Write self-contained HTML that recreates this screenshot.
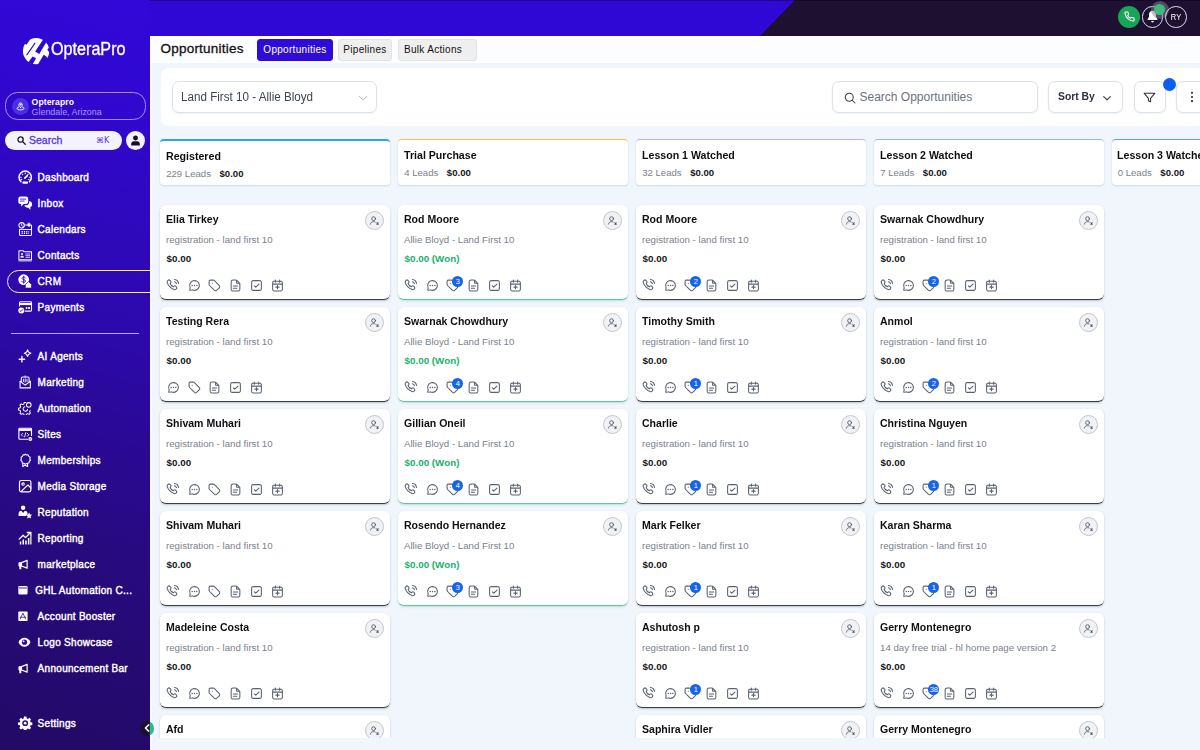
<!DOCTYPE html>
<html lang="en"><head><meta charset="utf-8"><title>Opportunities</title>
<style>
*{box-sizing:border-box;margin:0;padding:0}
html,body{width:1200px;height:750px;overflow:hidden;background:#f1f5fc;font-family:"Liberation Sans",sans-serif;color:#0f1115}
#top{position:absolute;z-index:2;left:0;top:0;width:1200px;height:35.500px;background:#3008d6;overflow:hidden}
#side{position:absolute;z-index:3;left:0;top:0;width:150px;height:750px;overflow:hidden;background:linear-gradient(195deg,#3108d8 0%,#3008d2 12%,#2c09a8 45%,#270a80 70%,#240a6c 92%,#230a66 100%)}
#main{position:absolute;left:150px;top:35px;width:1050px;height:715px;background:#f1f5fc;box-shadow:inset 2px 0 0 #f8f9fe;overflow:hidden}
#hdr{position:absolute;left:0;top:0;width:1050px;height:28px;background:#fcfdff}
#hdr .ttl{position:absolute;left:10.500px;top:6.200px;font-size:13.500px;color:#111;letter-spacing:.22px;-webkit-text-stroke:.3px #111}
.tab{position:absolute;top:3.500px;height:22px;background:#efefef;border:1px solid #e2e2e2;border-radius:3px;font-size:10px;line-height:20.500px;text-align:center;color:#111;font-weight:400;letter-spacing:.3px}
.tab.on{background:#2f0bd9;border-color:#2f0bd9;color:#fff}
#fb{position:absolute;left:10.500px;top:32.500px;width:1045px;height:58.500px;background:#fff;border-radius:8px}
#board{position:absolute;left:0;top:0;width:1300px;height:703px;overflow:hidden}
.col{position:absolute;top:103.500px;width:229.500px}
.col:nth-child(1){left:10px}.col:nth-child(2){left:248px}.col:nth-child(3){left:486px}.col:nth-child(4){left:724px}.col:nth-child(5){left:961.500px}
.ch{height:46px;background:#fff;border-top:1.600px solid #27a7e3;border-radius:4px;box-shadow:0 1px 2px rgba(60,80,120,.18);margin-bottom:20px;position:relative}
.ct{position:absolute;left:5.900px;top:9px;font-size:11.400px;font-weight:700;color:#0e0f12;white-space:nowrap;transform-origin:0 50%;transform:scaleX(.932)}
.cl{position:absolute;left:6.200px;top:27.500px;font-size:9.600px;color:#7b828d;white-space:nowrap}
.cl b{color:#15171c;margin-left:8.500px;font-weight:700;font-size:9.600px}
.card{position:relative;height:95.500px;margin-bottom:6.500px;background:#fff;border-radius:6px;border-bottom:1.500px solid #3a3d45;box-shadow:0 1px 2px rgba(40,50,70,.25)}
.card.won{border-bottom-color:#5fc99a;box-shadow:0 1px 2px rgba(60,180,130,.3)}
.nm{position:absolute;left:6px;top:8.100px;font-size:11.200px;font-weight:700;color:#0e0f12;white-space:nowrap;transform-origin:0 50%;transform:scaleX(.942)}
.sub{position:absolute;left:6px;top:29.600px;font-size:9.700px;color:#7b828d;white-space:nowrap}
.amt{position:absolute;left:6.600px;top:48.700px;font-size:9.800px;font-weight:700;color:#15171c;white-space:nowrap}
.amt.won{color:#17b26a}
.av{position:absolute;left:205px;top:6.500px;width:19px;height:19px;border-radius:50%;background:#f1f2f5;border:1px solid #c3c6cc;display:flex;align-items:center;justify-content:center}
.ics{position:absolute;left:6.200px;top:73.800px;height:14px;display:flex}
.ic{position:relative;width:14px;height:14px;margin-right:6.850px;display:flex;align-items:center;justify-content:center}
.ic svg{display:block;flex:none}
.bdg{position:absolute;left:6.300px;top:-2.800px;width:11px;height:11px;border-radius:50%;background:#1565e6;color:#fff;font-size:7.500px;line-height:11px;text-align:center;letter-spacing:-.3px}
.nv{position:absolute;left:0;width:150px;height:26px}
.nv .ni{position:absolute;left:18.300px;top:5.800px;width:14.400px;height:14.400px}
.nt{position:absolute;top:8px;font-size:10px;color:#fff;font-weight:400;white-space:nowrap;letter-spacing:.3px;-webkit-text-stroke:.4px #fff}
.nv.act::before{content:"";box-sizing:border-box;position:absolute;left:6.500px;top:1.700px;width:160px;height:23.600px;border:1.900px solid #efebff;border-radius:12px}
.dv{position:absolute;left:10.500px;top:333px;width:128.500px;height:1px;background:#b9a6ff}
#collapse{position:absolute;z-index:5;left:140.300px;top:720.500px;width:14px;height:15px;border-radius:7.500px;background:linear-gradient(90deg,#1b1030 0,#1b1030 66%,#2fba8c 74%);display:flex;align-items:center;justify-content:center;padding-right:1px}
.lt{position:absolute;left:51.300px;top:37px;font-size:19px;line-height:24px;color:#fff;white-space:nowrap;-webkit-text-stroke:.35px #fff}
.lt span{display:inline-block;transform-origin:0 50%;transform:scaleX(.85)}
.loc{position:absolute;left:5px;top:92px;width:140.500px;height:28px;border:1.500px solid #a18dff;border-radius:12.500px}
.lci{position:absolute;left:5.500px;top:4.500px;width:17px;height:17px;border-radius:50%;background:#4b2fe3;display:flex;align-items:center;justify-content:center}
.l1{position:absolute;left:25.600px;top:3.600px;font-size:8.600px;font-weight:700;color:#fff;letter-spacing:.1px}
.l2{position:absolute;left:25.600px;top:14.300px;font-size:8.900px;color:#a898ff}
.srch{position:absolute;left:5px;top:131px;width:117px;height:19px;border-radius:10px;background:#f5f2ff}
.st{position:absolute;left:24px;top:3px;font-size:10.500px;color:#5232e8;-webkit-text-stroke:.3px #5232e8}
.sk{position:absolute;left:91px;top:5px;font-size:8px;color:#5232e8;font-family:"DejaVu Sans","Liberation Sans",sans-serif}
.usr{position:absolute;left:126px;top:131px;width:19px;height:19px;border-radius:50%;background:#f5f2ff;display:flex;align-items:center;justify-content:center}
.tb{position:absolute;top:6px;width:21.500px;height:21.500px;border-radius:50%;display:flex;align-items:center;justify-content:center}
.ph{left:1118px;top:5.500px;width:22px;height:22px;background:#18a55a}
.bl{left:1141.500px;border:1.700px solid #e6dff5}
.ry{left:1165px;border:1.700px solid #e6dff5;color:#fff;font-size:8.800px}
.ry span{display:inline-block;transform:scaleX(.86)}
.halo{position:absolute;left:1150.500px;top:.5px;width:18px;height:18px;border-radius:50%;background:rgba(140,130,155,.5)}
.gd{position:absolute;left:1153.700px;top:3.600px;width:11.500px;height:11.500px;border-radius:50%;background:#3dba77}
.sel,.sb,.so,.fl,.mo{position:absolute;top:13.300px;height:32.500px;border:1px solid #dde1e8;border-radius:7px;background:#fff;box-shadow:0 1px 2px rgba(16,24,40,.06)}
.sel{left:11px;width:205.500px}
.sel .fx{position:absolute;left:8.500px;top:8px;font-size:12.500px;color:#3c4351;white-space:nowrap;transform:scaleX(.932)}
.sb{left:671.500px;width:206px}
.sb .fx{position:absolute;left:26.500px;top:8.500px;font-size:12px;color:#6b7280;white-space:nowrap}
.so{left:887px;width:75.500px}
.so .fx{position:absolute;left:9px;top:8.500px;font-size:11.500px;font-weight:700;color:#2d3340;white-space:nowrap;transform:scaleX(.9)}
.fl{left:973px;width:32px;display:flex;align-items:center;justify-content:center}
.mo{left:1015px;width:40px;display:flex;align-items:center;padding-left:13.500px}
.bd{position:absolute;left:1002px;top:10px;width:13px;height:13px;border-radius:50%;background:#0d5ef0}
.fx{display:inline-block;transform-origin:0 50%}
.col:nth-child(1) .ch{border-top-width:2px}

</style></head>
<body>
<div id="top"><svg width="1200" height="36" style="position:absolute;left:0;top:0"><polygon points="760,36 795,0 1200,0 1200,36" fill="#1d1031"/><rect x="0" y="0" width="1200" height="1" fill="rgba(10,0,40,.45)"/></svg>
<div class="tb ph"><svg width="11" height="11" viewBox="0 0 24 24" fill="none" stroke="#fff" stroke-width="2.300" stroke-linecap="round" stroke-linejoin="round"><path d="M22 16.900v3a2 2 0 0 1-2.200 2 19.800 19.800 0 0 1-8.600-3.100 19.500 19.500 0 0 1-6-6A19.800 19.800 0 0 1 2.100 4.200 2 2 0 0 1 4.100 2h3a2 2 0 0 1 2 1.700c.1 1 .4 1.900.7 2.800a2 2 0 0 1-.5 2.100L8.100 9.900a16 16 0 0 0 6 6l1.300-1.300a2 2 0 0 1 2.100-.4c.9.300 1.800.6 2.800.7a2 2 0 0 1 1.700 2z"/></svg></div>
<div class="tb bl"><svg width="13" height="13" style="margin-top:-1px" viewBox="0 0 24 24" fill="#fff"><path d="M12 1.500c-3.800 0-6.500 3-6.500 6.800v4.200L2.500 18.500h19l-3-6V8.300c0-3.800-2.700-6.800-6.500-6.800z"/><path d="M9.500 20.500h5a2.500 2.500 0 0 1-5 0z"/></svg></div>
<div class="halo"></div><div class="gd"></div>
<div class="tb ry"><span>RY</span></div>
</div>
<div id="side">
<svg class="lm" width="29" height="29" viewBox="0 0 28 28" style="position:absolute;left:22.200px;top:36.600px">
<defs><mask id="lmk"><circle cx="13.600" cy="13.600" r="12.700" fill="#fff"/>
<g fill="#000"><path d="M-1 3.800L4.400 7.600 9.400 0H-1z"/>
<path d="M12.300 5.300l1 .6L4.900 17.900l-1-.6z"/>
<path d="M20.700 2l3.400 2.100-7.500 12.200-3.900-2.200z"/>
<path d="M10.200 18.900l3.400 1.600L10.200 26.500 6 24.500z"/>
<path d="M28 7.500L24.400 12.300 28 17z"/>
<path d="M20.900 17.100L23.300 18.500 25.700 22.700 27.500 28H14.500z"/></g></mask></defs>
<rect x="0" y="0" width="28" height="28" fill="#fff" mask="url(#lmk)"/>
</svg>
<div class="lt"><span>OpteraPro</span></div>
<div class="loc"><span class="lci"><svg width="9" height="9" viewBox="0 0 24 24" fill="none" stroke="#fff" stroke-width="2.400" stroke-linecap="round" stroke-linejoin="round"><path d="M12 14.500c2-2.200 4.500-4.400 4.500-7.300A4.500 4.500 0 0 0 12 2.700a4.500 4.500 0 0 0-4.500 4.500c0 2.900 2.500 5.100 4.500 7.300z"/><circle cx="12" cy="7.200" r="1.300"/><path d="M7 13.500c-2.800.7-4.500 2-4.500 3.500 0 2.300 4.200 4 9.500 4s9.500-1.700 9.500-4c0-1.500-1.700-2.800-4.500-3.500"/></svg></span><span class="l1">Opterapro</span><span class="l2">Glendale, Arizona</span></div>
<div class="srch"><svg width="9" height="9" viewBox="0 0 24 24" fill="none" stroke="#1d1d25" stroke-width="3.600" stroke-linecap="round" style="position:absolute;left:11.800px;top:5.200px"><circle cx="9.500" cy="9.500" r="7"/><path d="M15 15l7 7"/></svg><span class="st">Search</span><span class="sk">&#8984;K</span></div>
<div class="usr"><svg width="11" height="11" viewBox="0 0 24 24" fill="#14121c"><circle cx="12" cy="6.500" r="5.300"/><path d="M2.500 23v-3.500c0-3.300 2.700-6 6-6h7c3.300 0 6 2.700 6 6V23z"/></svg></div>

<div class="nv" style="top:164px"><svg class="ni" width="14" height="14" viewBox="0 0 24 24" fill="none" stroke="#fff" stroke-width="2" stroke-linecap="round" stroke-linejoin="round"><path d="M5 19.600A10.300 10.300 0 1 1 19 19.600" stroke-width="2.500"/><rect x="7.500" y="19.300" width="9" height="3.500" rx="1" fill="#fff" stroke="none"/><path d="M11.300 13.700L15.500 9.500" stroke-width="2.800"/><path d="M12 4.800v1.400M5.200 12H4M20 12h-1.200M7 7l.9.900M17 7l-.9.900M5.300 16.300l1-.4M18.700 16.300l-1-.4" stroke-width="1.700"/></svg><span class="nt" style="left:37.6px">Dashboard</span></div><div class="nv" style="top:190px"><svg class="ni" width="14" height="14" viewBox="0 0 24 24" fill="none" stroke="#fff" stroke-width="2" stroke-linecap="round" stroke-linejoin="round"><path d="M4.500 .8h8.500a4 4 0 0 1 4 4v4.700a4 4 0 0 1-4 4H9.500l-4.300 4V13.400A4 4 0 0 1 .5 9.500V4.800a4 4 0 0 1 4-4z" fill="#fff" stroke="none"/><path d="M4.300 5.200h8.700M4.300 8.500h6" stroke="#3a14d0" stroke-width="1.500"/><path d="M18.800 8.500c2.700.5 4.700 2.600 4.700 5.500 0 2.100-1.200 3.900-3 4.700l.3 4.300-3.800-3.600c-3.300.1-5.800-1.300-6.500-3.800l3-.2c3.300-.3 5.300-2.700 5.300-5.900z" fill="#fff" stroke="none"/></svg><span class="nt" style="left:37.6px">Inbox</span></div><div class="nv" style="top:216px"><svg class="ni" width="14" height="14" viewBox="0 0 24 24" fill="none" stroke="#fff" stroke-width="2" stroke-linecap="round" stroke-linejoin="round"><path d="M11.500 5H21a1.500 1.500 0 0 1 1.500 1.500V21a1.500 1.500 0 0 1-1.500 1.500H4A1.500 1.500 0 0 1 2.500 21V12" stroke-width="1.800"/><circle cx="6" cy="5.500" r="4.500" stroke-width="1.800"/><path d="M6 3.500v2.300l1.500 1" stroke-width="1.400"/><path d="M16.500 2.500v4.500h3.500v-4.500z" fill="#fff" stroke-width="1"/><path d="M2.500 12.500h20" stroke-width="1.600"/><path d="M6 16h12.500M6 19h12.500" stroke-width="1.800" stroke-dasharray="2 1.800" stroke-linecap="butt"/></svg><span class="nt" style="left:37.6px">Calendars</span></div><div class="nv" style="top:242px"><svg class="ni" width="14" height="14" viewBox="0 0 24 24" fill="none" stroke="#fff" stroke-width="2" stroke-linecap="round" stroke-linejoin="round"><path d="M1.500 4.500h7l1.500 1.800H22.500V19.500H1.500z" stroke-width="1.700"/><path d="M1.500 21.500h21" stroke-width="1.400"/><circle cx="6.800" cy="10" r="1.700" fill="#fff" stroke="none"/><path d="M3.800 16c0-2.200 1.200-3.200 3-3.200s3 1 3 3.200z" fill="#fff" stroke="none"/><path d="M13 10h6.500M13 12.800h6.500M13 15.600h6.500" stroke-width="1.300"/></svg><span class="nt" style="left:37.6px">Contacts</span></div><div class="nv act" style="top:268px"><svg class="ni" width="14" height="14" viewBox="0 0 24 24" fill="none" stroke="#fff" stroke-width="2" stroke-linecap="round" stroke-linejoin="round"><circle cx="9.500" cy="9.500" r="9" fill="#fff" stroke="none"/><path d="M12.300 6.800c-.4-1-1.400-1.600-2.800-1.600-1.700 0-2.900.8-2.900 2.100 0 3 5.900 1.300 5.900 4.400 0 1.300-1.200 2.200-3 2.200-1.600 0-2.700-.7-3.100-1.800M9.500 3.600v11.800" stroke="#3513c8" stroke-width="1.600" fill="none"/><path d="M12.500 17.500l5-5 5 5v6h-10z" fill="#fff" stroke="#2f0cd0" stroke-width="1.200"/></svg><span class="nt" style="left:37.6px">CRM</span></div><div class="nv" style="top:294px"><svg class="ni" width="14" height="14" viewBox="0 0 24 24" fill="none" stroke="#fff" stroke-width="2" stroke-linecap="round" stroke-linejoin="round"><path d="M2.500 10V4.500A1.500 1.500 0 0 1 4 3h17a1.500 1.500 0 0 1 1.500 1.500V17A1.500 1.500 0 0 1 21 18.500H12" stroke-width="1.800"/><path d="M2.500 5h20v3.500h-20z" fill="#fff" stroke="none"/><circle cx="5.500" cy="17.500" r="5" fill="#fff" stroke="none"/><path d="M3.300 17.600l1.600 1.600 3-3.200" stroke="#3211cc" stroke-width="1.600"/><path d="M13 11.500h2.500v3.500H13zM17 11.500h3v3.500h-3z" fill="#fff" stroke="none"/></svg><span class="nt" style="left:37.6px">Payments</span></div>
<div class="dv"></div>
<div class="nv" style="top:343px"><svg class="ni" width="14" height="14" viewBox="0 0 24 24" fill="none" stroke="#fff" stroke-width="2" stroke-linecap="round" stroke-linejoin="round"><path d="M16 1.500c.6 3.200 2.300 4.900 5.500 5.500-3.200.6-4.900 2.300-5.500 5.500-.6-3.200-2.300-4.900-5.500-5.500 3.200-.6 4.900-2.300 5.500-5.500z" stroke-width="1.900"/><path d="M6.500 12.500v9M2 17h9" stroke-width="2.300"/></svg><span class="nt" style="left:37.6px">AI Agents</span></div><div class="nv" style="top:369px"><svg class="ni" width="14" height="14" viewBox="0 0 24 24" fill="none" stroke="#fff" stroke-width="2" stroke-linecap="round" stroke-linejoin="round"><path d="M3.500 10.500V21.500h17V10.500" stroke-width="1.800"/><path d="M3.500 10.500L12 17l8.500-6.500" stroke-width="1.800"/><path d="M5.500 11V5.500c0-1 .8-2 2-2h9c1.200 0 2 1 2 2V11" stroke-width="1.700"/><path d="M12 1.500v2" stroke-width="1.600"/><path d="M9 7v4M12 6.500v5.500M15 7v4" stroke-width="1.500"/></svg><span class="nt" style="left:37.6px">Marketing</span></div><div class="nv" style="top:395px"><svg class="ni" width="14" height="14" viewBox="0 0 24 24" fill="none" stroke="#fff" stroke-width="2" stroke-linecap="round" stroke-linejoin="round"><path d="M13 2.500h-2.500l-.8 2.600-2 .9-2.500-1.200-2 2 1.200 2.500-.9 2-2.600.8v2.800l2.600.8.900 2-1.200 2.500 2 2 2.500-1.200 2 .9.800 2.600h2.800l.8-2.600 2-.9 2.500 1.200 2-2-1.200-2.500.9-2" stroke-width="1.700"/><path d="M11.500 9.500a3.800 3.800 0 1 0 4.500 4.500" stroke-width="1.700"/><circle cx="18" cy="6.500" r="3.800" stroke-width="1.700"/></svg><span class="nt" style="left:37.6px">Automation</span></div><div class="nv" style="top:421px"><svg class="ni" width="14" height="14" viewBox="0 0 24 24" fill="none" stroke="#fff" stroke-width="2" stroke-linecap="round" stroke-linejoin="round"><path d="M22.500 14V3.500A1.500 1.500 0 0 0 21 2H3A1.500 1.500 0 0 0 1.500 3.500V19A1.500 1.500 0 0 0 3 20.500H16" stroke-width="1.900"/><path d="M1.500 3h21v3.500h-21z" fill="#fff" stroke="none"/><path d="M8 10.500l-2.500 2.500L8 15.500M15.500 10.500l2.500 2.500-2.500 2.500M13 9.500l-2 7" stroke-width="1.500"/><circle cx="20.500" cy="20" r="3.300" fill="#fff" stroke="none"/><path d="M19 20l1 1 1.800-1.800" stroke="#2d0bb0" stroke-width="1.100"/></svg><span class="nt" style="left:37.6px">Sites</span></div><div class="nv" style="top:447px"><svg class="ni" width="14" height="14" viewBox="0 0 24 24" fill="none" stroke="#fff" stroke-width="2" stroke-linecap="round" stroke-linejoin="round"><path d="M12 1.800l2.200 1.500 2.700-.2 1.100 2.500 2.300 1.400-.5 2.600.9 2.500-1.900 1.900-.5 2.600-2.600.5L12 18.800l-2.300-1.700-2.600-.5-.5-2.600-1.900-1.900.9-2.500-.5-2.600 2.300-1.400 1.100-2.500 2.700.2z" stroke-width="1.800"/><path d="M8 17.500v5l4-2 4 2v-5" stroke-width="1.800"/></svg><span class="nt" style="left:37.6px">Memberships</span></div><div class="nv" style="top:473px"><svg class="ni" width="14" height="14" viewBox="0 0 24 24" fill="none" stroke="#fff" stroke-width="2" stroke-linecap="round" stroke-linejoin="round"><rect x="2.500" y="2.500" width="19" height="19" rx="3" stroke-width="2"/><circle cx="8.500" cy="8.500" r="2" stroke-width="1.800"/><path d="M5 21L16.500 10l5 5" stroke-width="2"/></svg><span class="nt" style="left:37.6px">Media Storage</span></div><div class="nv" style="top:499px"><svg class="ni" width="14" height="14" viewBox="0 0 24 24" fill="none" stroke="#fff" stroke-width="2" stroke-linecap="round" stroke-linejoin="round"><circle cx="8.500" cy="4.500" r="3.700" fill="#fff" stroke="none"/><path d="M1 18.500v-4.500c0-2.500 2-4.500 4.500-4.500l3 4 3-4c2.500 0 4.500 2 4.500 4.500v1.500l-3 3z" fill="#fff" stroke="none"/><path d="M18.500 12.500l1.600 3.300 3.600.5-2.600 2.500.6 3.600-3.200-1.700-3.200 1.700.6-3.600-2.600-2.500 3.600-.5z" fill="#fff" stroke="none"/></svg><span class="nt" style="left:37.6px">Reputation</span></div><div class="nv" style="top:525px"><svg class="ni" width="14" height="14" viewBox="0 0 24 24" fill="none" stroke="#fff" stroke-width="2" stroke-linecap="round" stroke-linejoin="round"><path d="M2 13.500L8.500 7l4 4L21 2.500M15.500 2.500H21.500V8.500" stroke-width="2.200"/><path d="M3 17.500h2.500v5H3zM7.500 14h2.500v8.500H7.500zM12 16h2.500v6.500H12zM16.500 11.500h2.500v11h-2.500zM20.500 9h2v13.500h-2z" fill="#fff" stroke="none"/></svg><span class="nt" style="left:37.6px">Reporting</span></div><div class="nv" style="top:551px"><svg class="ni" width="14" height="14" viewBox="0 0 24 24" fill="none" stroke="#fff" stroke-width="2" stroke-linecap="round" stroke-linejoin="round"><path d="M.8 9.800a1 1 0 0 1 1-1H5.800v6.600H1.800a1 1 0 0 1-1-1z" fill="#fff" stroke="none"/><path d="M2.200 15h3.300v5.400H2.200z" fill="#fff" stroke="none"/><path d="M5.800 9.300L15.200 5.600v13L5.800 14.900z" stroke-width="2"/></svg><span class="nt" style="left:37.6px">marketplace</span></div><div class="nv" style="top:577px"><svg class="ni" width="14" height="14" viewBox="0 0 24 24" fill="none" stroke="#fff" stroke-width="2" stroke-linecap="round" stroke-linejoin="round"><rect x=".5" y="5" width="15.500" height="14" rx="1.800" fill="#fff" stroke="none"/><path d="M1.500 8.300h13.500" stroke="#2b0a9c" stroke-width="1.500" stroke-linecap="butt"/></svg><span class="nt" style="left:35.2px">GHL Automation C...</span></div><div class="nv" style="top:603px"><svg class="ni" width="14" height="14" viewBox="0 0 24 24" fill="none" stroke="#fff" stroke-width="2" stroke-linecap="round" stroke-linejoin="round"><rect x=".5" y="4" width="15.500" height="16" rx="1.200" fill="#fff" stroke="none"/><path d="M8.200 7.500l-3.500 6.300M8.200 7.500l3.500 6.300M3.600 13.800h9.400M4.400 15.500l-.6 1M12 15.500l.6 1" stroke="#2b0a96" stroke-width="1.300"/></svg><span class="nt" style="left:37.6px">Account Booster</span></div><div class="nv" style="top:629px"><svg class="ni" width="14" height="14" viewBox="0 0 24 24" fill="none" stroke="#fff" stroke-width="2" stroke-linecap="round" stroke-linejoin="round"><path d="M.8 12C2.800 7.300 6.300 4.500 10.800 4.500S18.800 7.300 20.800 12C18.800 16.700 15.300 19.500 10.800 19.500S2.800 16.700 .8 12z" fill="#fff" stroke="none"/><circle cx="10.800" cy="12" r="4.300" fill="#2a0a90" stroke="none"/><circle cx="9.300" cy="10.600" r="1.600" fill="#fff" stroke="none"/></svg><span class="nt" style="left:37.6px">Logo Showcase</span></div><div class="nv" style="top:655px"><svg class="ni" width="14" height="14" viewBox="0 0 24 24" fill="none" stroke="#fff" stroke-width="2" stroke-linecap="round" stroke-linejoin="round"><path d="M.8 9.800a1 1 0 0 1 1-1H5.800v6.600H1.800a1 1 0 0 1-1-1z" fill="#fff" stroke="none"/><path d="M2.200 15h3.300v5.400H2.200z" fill="#fff" stroke="none"/><path d="M5.800 9.300L15.200 5.600v13L5.800 14.900z" stroke-width="2"/></svg><span class="nt" style="left:37.6px">Announcement Bar</span></div>
<div class="nv" style="top:710px"><svg class="ni" width="14" height="14" viewBox="0 0 24 24" fill="none" stroke="#fff" stroke-width="2" stroke-linecap="round" stroke-linejoin="round"><path d="M10 1h4l.6 3 1.800.8 2.600-1.700 2.800 2.800-1.700 2.600.8 1.800 3 .6v4l-3 .6-.8 1.800 1.700 2.600-2.800 2.800-2.600-1.700-1.800.8-.6 3h-4l-.6-3-1.800-.8-2.600 1.700-2.800-2.800 1.700-2.600-.8-1.800-3-.6v-4l3-.6.800-1.800L2.200 5.900 5 3.100l2.600 1.700 1.800-.8z" fill="#fff" stroke="none"/><circle cx="12" cy="12" r="4.800" fill="#2a0a82" stroke="none"/><circle cx="12" cy="12" r="2.300" fill="#fff" stroke="none"/></svg><span class="nt" style="left:37.6px">Settings</span></div>
</div>
<div id="collapse"><svg width="6" height="8" viewBox="0 0 8 10" fill="none" stroke="#fff" stroke-width="2.200" stroke-linecap="round" stroke-linejoin="round"><path d="M6 1L2 5l4 4"/></svg></div>
<div id="main">
<div id="hdr"><span class="ttl">Opportunities</span><span class="tab on" style="left:107px;width:76px">Opportunities</span><span class="tab" style="left:188px;width:54px">Pipelines</span><span class="tab" style="left:248px;width:79px;text-align:left;padding-left:5px">Bulk Actions</span></div>
<div id="fb"><div class="sel"><span class="fx">Land First 10 - Allie Bloyd</span><svg width="10" height="10" viewBox="0 0 24 24" fill="none" stroke="#b4bac4" stroke-width="2.400" stroke-linecap="round" stroke-linejoin="round" style="position:absolute;left:185.500px;top:11.500px"><path d="M3 8l9 9 9-9"/></svg></div>
<div class="sb"><svg width="12" height="12" viewBox="0 0 24 24" fill="none" stroke="#3b4250" stroke-width="2.100" stroke-linecap="round" style="position:absolute;left:10.500px;top:10px"><circle cx="10.500" cy="10.500" r="8"/><path d="M16.500 16.500l5.500 5.500"/></svg><span class="fx">Search Opportunities</span></div>
<div class="so"><span class="fx">Sort By</span><svg width="10" height="10" viewBox="0 0 24 24" fill="none" stroke="#3b4250" stroke-width="2.800" stroke-linecap="round" stroke-linejoin="round" style="position:absolute;left:53px;top:11.500px"><path d="M4 8.500l8 8 8-8"/></svg></div>
<div class="fl"><svg width="13" height="13" viewBox="0 0 24 24" fill="none" stroke="#2c313b" stroke-width="1.900" stroke-linecap="round" stroke-linejoin="round"><path d="M2 4h20l-8 9.500v6.500l-4-2v-4.500z"/></svg></div>
<div class="bd"></div>
<div class="mo"><svg width="4" height="12" viewBox="0 0 4 12" fill="#2c313b"><circle cx="2" cy="1.800" r="1.100"/><circle cx="2" cy="6" r="1.100"/><circle cx="2" cy="10.200" r="1.100"/></svg></div>
</div>
<div id="board"><div class="col"><div class="ch" style="border-top-color:#27a7e3"><div class="ct">Registered</div><div class="cl"><span>229 Leads</span><b>$0.00</b></div></div><div class="card"><div class="nm">Elia Tirkey</div><span class="av"><svg width="11" height="11" viewBox="0 0 24 24" fill="none" stroke="#4b5260" stroke-width="1.8" stroke-linecap="round" stroke-linejoin="round" ><circle cx="10" cy="8" r="4.200"/><path d="M3 20c.6-3.400 3.200-5.500 7-5.500 1.300 0 2.400.2 3.400.700"/><path d="M17 17l3.200 3.200M20.200 17l-3.200 3.200" stroke-width="2.300"/></svg></span><div class="sub">registration - land first 10</div><div class="amt">$0.00</div><div class="ics"><span class="ic"><svg width="14" height="14" viewBox="0 0 24 24" fill="none" stroke="#596070" stroke-width="1.85" stroke-linecap="round" stroke-linejoin="round" ><path d="M14.5 2.5c3.6.4 6.5 3.300 7 7M14.500 6.500c1.700.3 3 1.600 3.300 3.300M10.200 13.900a14.600 14.600 0 0 1-2.900-4 .9.900 0 0 1 .1-1l.6-.6c.8-.8.8-2 0-2.800L6.500 4c-.8-.8-2-.8-2.800 0l-.6.600c-1 1-1.400 2.400-.9 3.700a19 19 0 0 0 4.500 7 19 19 0 0 0 7 4.500c1.300.5 2.700.1 3.700-.9l.6-.6c.8-.8.8-2 0-2.800l-1.500-1.500c-.8-.8-2-.8-2.800 0l-.6.600a.9.900 0 0 1-1 .1 14.600 14.600 0 0 1-1.900-1.800z"/></svg></span><span class="ic"><svg width="13" height="13" viewBox="0 0 24 24" fill="none" stroke="#596070" stroke-width="1.95" stroke-linecap="round" stroke-linejoin="round" ><path d="M7.700 12h.01M12 12h.01M16.300 12h.01" stroke-width="2.700"/><path d="M12 21a9 9 0 1 0-8.200-5.300c.1.300.2.500.2.700 0 .2 0 .4-.1.700l-.8 3c-.1.500.3.900.8.800l3-.8c.3-.1.500-.1.700-.1.200 0 .4.100.700.200A9 9 0 0 0 12 21z"/></svg></span><span class="ic"><svg width="13" height="13" viewBox="0 0 24 24" fill="none" stroke="#596070" stroke-width="1.95" stroke-linecap="round" stroke-linejoin="round" ><path d="M8 8h.01M2 5.200v4.500c0 .5 0 .7.100 1 .1.200.1.400.2.600.1.200.3.400.6.700l7.700 7.700c1.200 1.200 1.800 1.800 2.500 2 .6.200 1.200.2 1.800 0 .7-.2 1.300-.8 2.500-2l2.200-2.200c1.200-1.200 1.800-1.800 2-2.500.2-.6.200-1.200 0-1.800-.2-.7-.8-1.300-2-2.500L11.900 3c-.3-.3-.5-.5-.7-.6-.2-.1-.4-.2-.6-.2-.3-.1-.5-.1-1-.1H5.200c-1.100 0-1.700 0-2.100.2-.4.200-.7.500-.9.900C2 3.500 2 4.100 2 5.200z"/></svg></span><span class="ic"><svg width="13" height="13" viewBox="0 0 24 24" fill="none" stroke="#596070" stroke-width="1.95" stroke-linecap="round" stroke-linejoin="round" ><path d="M14 2.300V6.400c0 .6 0 .8.100 1 .1.200.2.400.4.400.2.200.5.200 1.100.2h4.100M14 17H8M16 13H8M20 9.900V17.200c0 1.700 0 2.500-.3 3.200-.3.600-.8 1-1.300 1.300-.7.300-1.500.3-3.200.3H8.800c-1.700 0-2.500 0-3.200-.3-.6-.3-1-.8-1.300-1.300C4 19.700 4 18.900 4 17.200V6.800c0-1.700 0-2.500.3-3.200.3-.6.800-1 1.300-1.300C6.300 2 7.100 2 8.800 2h3.300c.7 0 1.100 0 1.400.1.300.1.600.2.900.4.300.2.600.5 1.100 1l3 3c.5.500.8.800 1 1.100.2.300.3.600.4.900.1.300.1.700.1 1.400z"/></svg></span><span class="ic"><svg width="13" height="13" viewBox="0 0 24 24" fill="none" stroke="#596070" stroke-width="1.95" stroke-linecap="round" stroke-linejoin="round" ><path d="M8 12.500l2.700 2.700L16.500 9.500M7.800 21h8.400c1.700 0 2.500 0 3.200-.3.600-.3 1-.8 1.300-1.300.3-.7.300-1.500.3-3.200V7.800c0-1.700 0-2.500-.3-3.200-.3-.6-.8-1-1.300-1.300C18.700 3 17.900 3 16.200 3H7.800c-1.700 0-2.500 0-3.200.3-.6.300-1 .8-1.300 1.300C3 5.300 3 6.100 3 7.800v8.400c0 1.700 0 2.500.3 3.200.3.600.8 1 1.300 1.300.7.300 1.500.3 3.200.3z"/></svg></span><span class="ic"><svg width="13" height="13" viewBox="0 0 24 24" fill="none" stroke="#596070" stroke-width="1.95" stroke-linecap="round" stroke-linejoin="round" ><path d="M21 9.500H3M16 2v4M8 2v4M12 18v-6M9 15h6M7.800 22h8.400c1.700 0 2.500 0 3.200-.3.600-.3 1-.8 1.300-1.300.3-.7.300-1.500.3-3.200V8.800c0-1.700 0-2.500-.3-3.200-.3-.6-.8-1-1.300-1.300C18.700 4 17.900 4 16.200 4H7.800c-1.700 0-2.500 0-3.200.3-.6.300-1 .8-1.300 1.300C3 6.300 3 7.100 3 8.800v8.400c0 1.700 0 2.500.3 3.200.3.600.8 1 1.300 1.300.7.300 1.500.3 3.200.3z"/></svg></span></div></div><div class="card"><div class="nm">Testing Rera</div><span class="av"><svg width="11" height="11" viewBox="0 0 24 24" fill="none" stroke="#4b5260" stroke-width="1.8" stroke-linecap="round" stroke-linejoin="round" ><circle cx="10" cy="8" r="4.200"/><path d="M3 20c.6-3.400 3.200-5.500 7-5.500 1.300 0 2.400.2 3.400.700"/><path d="M17 17l3.200 3.200M20.200 17l-3.200 3.200" stroke-width="2.300"/></svg></span><div class="sub">registration - land first 10</div><div class="amt">$0.00</div><div class="ics"><span class="ic"><svg width="13" height="13" viewBox="0 0 24 24" fill="none" stroke="#596070" stroke-width="1.95" stroke-linecap="round" stroke-linejoin="round" ><path d="M7.700 12h.01M12 12h.01M16.300 12h.01" stroke-width="2.700"/><path d="M12 21a9 9 0 1 0-8.200-5.300c.1.300.2.500.2.700 0 .2 0 .4-.1.700l-.8 3c-.1.500.3.900.8.800l3-.8c.3-.1.500-.1.700-.1.200 0 .4.100.700.200A9 9 0 0 0 12 21z"/></svg></span><span class="ic"><svg width="13" height="13" viewBox="0 0 24 24" fill="none" stroke="#596070" stroke-width="1.95" stroke-linecap="round" stroke-linejoin="round" ><path d="M8 8h.01M2 5.200v4.500c0 .5 0 .7.100 1 .1.200.1.400.2.600.1.200.3.400.6.700l7.700 7.700c1.200 1.200 1.800 1.800 2.500 2 .6.200 1.200.2 1.800 0 .7-.2 1.300-.8 2.500-2l2.200-2.200c1.200-1.200 1.800-1.800 2-2.500.2-.6.200-1.200 0-1.800-.2-.7-.8-1.300-2-2.500L11.900 3c-.3-.3-.5-.5-.7-.6-.2-.1-.4-.2-.6-.2-.3-.1-.5-.1-1-.1H5.200c-1.100 0-1.700 0-2.100.2-.4.200-.7.500-.9.900C2 3.500 2 4.100 2 5.200z"/></svg></span><span class="ic"><svg width="13" height="13" viewBox="0 0 24 24" fill="none" stroke="#596070" stroke-width="1.95" stroke-linecap="round" stroke-linejoin="round" ><path d="M14 2.300V6.400c0 .6 0 .8.100 1 .1.200.2.400.4.400.2.200.5.200 1.100.2h4.100M14 17H8M16 13H8M20 9.900V17.200c0 1.700 0 2.500-.3 3.200-.3.600-.8 1-1.300 1.300-.7.300-1.500.3-3.200.3H8.800c-1.700 0-2.500 0-3.200-.3-.6-.3-1-.8-1.300-1.300C4 19.700 4 18.900 4 17.200V6.800c0-1.700 0-2.500.3-3.200.3-.6.800-1 1.300-1.300C6.300 2 7.100 2 8.800 2h3.300c.7 0 1.100 0 1.400.1.300.1.600.2.900.4.300.2.600.5 1.100 1l3 3c.5.500.8.800 1 1.100.2.300.3.600.4.900.1.300.1.700.1 1.400z"/></svg></span><span class="ic"><svg width="13" height="13" viewBox="0 0 24 24" fill="none" stroke="#596070" stroke-width="1.95" stroke-linecap="round" stroke-linejoin="round" ><path d="M8 12.500l2.700 2.700L16.500 9.500M7.800 21h8.400c1.700 0 2.500 0 3.200-.3.600-.3 1-.8 1.300-1.300.3-.7.300-1.500.3-3.200V7.800c0-1.700 0-2.500-.3-3.200-.3-.6-.8-1-1.300-1.300C18.700 3 17.900 3 16.200 3H7.800c-1.700 0-2.500 0-3.200.3-.6.300-1 .8-1.300 1.300C3 5.300 3 6.100 3 7.800v8.400c0 1.700 0 2.500.3 3.200.3.600.8 1 1.300 1.300.7.300 1.500.3 3.200.3z"/></svg></span><span class="ic"><svg width="13" height="13" viewBox="0 0 24 24" fill="none" stroke="#596070" stroke-width="1.95" stroke-linecap="round" stroke-linejoin="round" ><path d="M21 9.500H3M16 2v4M8 2v4M12 18v-6M9 15h6M7.800 22h8.400c1.700 0 2.500 0 3.200-.3.600-.3 1-.8 1.300-1.300.3-.7.300-1.500.3-3.200V8.800c0-1.700 0-2.500-.3-3.200-.3-.6-.8-1-1.300-1.300C18.700 4 17.900 4 16.200 4H7.800c-1.700 0-2.500 0-3.200.3-.6.300-1 .8-1.300 1.300C3 6.300 3 7.100 3 8.800v8.400c0 1.700 0 2.500.3 3.200.3.600.8 1 1.300 1.300.7.300 1.500.3 3.200.3z"/></svg></span></div></div><div class="card"><div class="nm">Shivam Muhari</div><span class="av"><svg width="11" height="11" viewBox="0 0 24 24" fill="none" stroke="#4b5260" stroke-width="1.8" stroke-linecap="round" stroke-linejoin="round" ><circle cx="10" cy="8" r="4.200"/><path d="M3 20c.6-3.400 3.200-5.500 7-5.500 1.300 0 2.400.2 3.400.700"/><path d="M17 17l3.200 3.200M20.200 17l-3.200 3.200" stroke-width="2.300"/></svg></span><div class="sub">registration - land first 10</div><div class="amt">$0.00</div><div class="ics"><span class="ic"><svg width="14" height="14" viewBox="0 0 24 24" fill="none" stroke="#596070" stroke-width="1.85" stroke-linecap="round" stroke-linejoin="round" ><path d="M14.5 2.5c3.6.4 6.5 3.300 7 7M14.500 6.500c1.700.3 3 1.600 3.300 3.300M10.200 13.900a14.600 14.600 0 0 1-2.900-4 .9.900 0 0 1 .1-1l.6-.6c.8-.8.8-2 0-2.800L6.500 4c-.8-.8-2-.8-2.800 0l-.6.600c-1 1-1.400 2.400-.9 3.700a19 19 0 0 0 4.500 7 19 19 0 0 0 7 4.500c1.300.5 2.700.1 3.700-.9l.6-.6c.8-.8.8-2 0-2.800l-1.500-1.500c-.8-.8-2-.8-2.800 0l-.6.600a.9.900 0 0 1-1 .1 14.600 14.600 0 0 1-1.900-1.800z"/></svg></span><span class="ic"><svg width="13" height="13" viewBox="0 0 24 24" fill="none" stroke="#596070" stroke-width="1.95" stroke-linecap="round" stroke-linejoin="round" ><path d="M7.700 12h.01M12 12h.01M16.300 12h.01" stroke-width="2.700"/><path d="M12 21a9 9 0 1 0-8.200-5.300c.1.300.2.500.2.700 0 .2 0 .4-.1.700l-.8 3c-.1.500.3.900.8.800l3-.8c.3-.1.500-.1.700-.1.200 0 .4.100.700.200A9 9 0 0 0 12 21z"/></svg></span><span class="ic"><svg width="13" height="13" viewBox="0 0 24 24" fill="none" stroke="#596070" stroke-width="1.95" stroke-linecap="round" stroke-linejoin="round" ><path d="M8 8h.01M2 5.200v4.500c0 .5 0 .7.100 1 .1.200.1.400.2.600.1.200.3.400.6.700l7.700 7.700c1.200 1.200 1.800 1.800 2.500 2 .6.200 1.200.2 1.800 0 .7-.2 1.300-.8 2.500-2l2.200-2.200c1.200-1.200 1.800-1.800 2-2.500.2-.6.200-1.200 0-1.800-.2-.7-.8-1.300-2-2.500L11.900 3c-.3-.3-.5-.5-.7-.6-.2-.1-.4-.2-.6-.2-.3-.1-.5-.1-1-.1H5.200c-1.100 0-1.700 0-2.100.2-.4.200-.7.500-.9.900C2 3.500 2 4.100 2 5.200z"/></svg></span><span class="ic"><svg width="13" height="13" viewBox="0 0 24 24" fill="none" stroke="#596070" stroke-width="1.95" stroke-linecap="round" stroke-linejoin="round" ><path d="M14 2.300V6.400c0 .6 0 .8.100 1 .1.200.2.400.4.400.2.200.5.200 1.100.2h4.100M14 17H8M16 13H8M20 9.900V17.200c0 1.700 0 2.500-.3 3.200-.3.600-.8 1-1.300 1.300-.7.300-1.500.3-3.200.3H8.800c-1.700 0-2.500 0-3.200-.3-.6-.3-1-.8-1.300-1.300C4 19.700 4 18.900 4 17.200V6.800c0-1.700 0-2.500.3-3.200.3-.6.800-1 1.300-1.300C6.300 2 7.100 2 8.800 2h3.300c.7 0 1.100 0 1.400.1.300.1.600.2.900.4.300.2.600.5 1.100 1l3 3c.5.500.8.800 1 1.100.2.300.3.600.4.900.1.300.1.700.1 1.400z"/></svg></span><span class="ic"><svg width="13" height="13" viewBox="0 0 24 24" fill="none" stroke="#596070" stroke-width="1.95" stroke-linecap="round" stroke-linejoin="round" ><path d="M8 12.500l2.700 2.700L16.500 9.500M7.800 21h8.400c1.700 0 2.500 0 3.200-.3.600-.3 1-.8 1.300-1.300.3-.7.300-1.500.3-3.200V7.800c0-1.700 0-2.500-.3-3.200-.3-.6-.8-1-1.300-1.300C18.700 3 17.900 3 16.200 3H7.800c-1.700 0-2.500 0-3.200.3-.6.300-1 .8-1.300 1.300C3 5.300 3 6.100 3 7.800v8.400c0 1.700 0 2.500.3 3.200.3.600.8 1 1.300 1.300.7.300 1.500.3 3.200.3z"/></svg></span><span class="ic"><svg width="13" height="13" viewBox="0 0 24 24" fill="none" stroke="#596070" stroke-width="1.95" stroke-linecap="round" stroke-linejoin="round" ><path d="M21 9.500H3M16 2v4M8 2v4M12 18v-6M9 15h6M7.800 22h8.400c1.700 0 2.500 0 3.200-.3.600-.3 1-.8 1.300-1.300.3-.7.300-1.500.3-3.200V8.800c0-1.700 0-2.500-.3-3.200-.3-.6-.8-1-1.300-1.300C18.700 4 17.900 4 16.200 4H7.800c-1.700 0-2.500 0-3.200.3-.6.300-1 .8-1.300 1.300C3 6.300 3 7.100 3 8.800v8.400c0 1.700 0 2.500.3 3.200.3.600.8 1 1.300 1.300.7.300 1.500.3 3.200.3z"/></svg></span></div></div><div class="card"><div class="nm">Shivam Muhari</div><span class="av"><svg width="11" height="11" viewBox="0 0 24 24" fill="none" stroke="#4b5260" stroke-width="1.8" stroke-linecap="round" stroke-linejoin="round" ><circle cx="10" cy="8" r="4.200"/><path d="M3 20c.6-3.400 3.200-5.500 7-5.500 1.300 0 2.400.2 3.400.700"/><path d="M17 17l3.200 3.200M20.200 17l-3.200 3.200" stroke-width="2.300"/></svg></span><div class="sub">registration - land first 10</div><div class="amt">$0.00</div><div class="ics"><span class="ic"><svg width="14" height="14" viewBox="0 0 24 24" fill="none" stroke="#596070" stroke-width="1.85" stroke-linecap="round" stroke-linejoin="round" ><path d="M14.5 2.5c3.6.4 6.5 3.300 7 7M14.500 6.500c1.700.3 3 1.600 3.300 3.300M10.200 13.900a14.600 14.600 0 0 1-2.900-4 .9.900 0 0 1 .1-1l.6-.6c.8-.8.8-2 0-2.800L6.500 4c-.8-.8-2-.8-2.800 0l-.6.600c-1 1-1.400 2.400-.9 3.700a19 19 0 0 0 4.500 7 19 19 0 0 0 7 4.500c1.300.5 2.700.1 3.700-.9l.6-.6c.8-.8.8-2 0-2.800l-1.500-1.500c-.8-.8-2-.8-2.800 0l-.6.600a.9.900 0 0 1-1 .1 14.600 14.600 0 0 1-1.900-1.800z"/></svg></span><span class="ic"><svg width="13" height="13" viewBox="0 0 24 24" fill="none" stroke="#596070" stroke-width="1.95" stroke-linecap="round" stroke-linejoin="round" ><path d="M7.700 12h.01M12 12h.01M16.300 12h.01" stroke-width="2.700"/><path d="M12 21a9 9 0 1 0-8.200-5.300c.1.300.2.500.2.700 0 .2 0 .4-.1.700l-.8 3c-.1.500.3.900.8.800l3-.8c.3-.1.500-.1.700-.1.200 0 .4.100.700.200A9 9 0 0 0 12 21z"/></svg></span><span class="ic"><svg width="13" height="13" viewBox="0 0 24 24" fill="none" stroke="#596070" stroke-width="1.95" stroke-linecap="round" stroke-linejoin="round" ><path d="M8 8h.01M2 5.200v4.500c0 .5 0 .7.100 1 .1.200.1.400.2.600.1.200.3.400.6.700l7.700 7.700c1.200 1.200 1.800 1.800 2.500 2 .6.200 1.200.2 1.800 0 .7-.2 1.300-.8 2.500-2l2.200-2.200c1.200-1.200 1.800-1.800 2-2.500.2-.6.200-1.200 0-1.800-.2-.7-.8-1.300-2-2.500L11.900 3c-.3-.3-.5-.5-.7-.6-.2-.1-.4-.2-.6-.2-.3-.1-.5-.1-1-.1H5.200c-1.100 0-1.700 0-2.100.2-.4.200-.7.500-.9.900C2 3.500 2 4.100 2 5.200z"/></svg></span><span class="ic"><svg width="13" height="13" viewBox="0 0 24 24" fill="none" stroke="#596070" stroke-width="1.95" stroke-linecap="round" stroke-linejoin="round" ><path d="M14 2.300V6.400c0 .6 0 .8.100 1 .1.200.2.400.4.400.2.200.5.200 1.100.2h4.100M14 17H8M16 13H8M20 9.900V17.200c0 1.700 0 2.500-.3 3.200-.3.600-.8 1-1.300 1.300-.7.300-1.500.3-3.200.3H8.800c-1.700 0-2.500 0-3.200-.3-.6-.3-1-.8-1.300-1.300C4 19.700 4 18.900 4 17.200V6.800c0-1.700 0-2.500.3-3.200.3-.6.800-1 1.300-1.300C6.300 2 7.100 2 8.800 2h3.300c.7 0 1.100 0 1.400.1.300.1.600.2.900.4.300.2.600.5 1.100 1l3 3c.5.500.8.800 1 1.100.2.300.3.600.4.900.1.300.1.700.1 1.400z"/></svg></span><span class="ic"><svg width="13" height="13" viewBox="0 0 24 24" fill="none" stroke="#596070" stroke-width="1.95" stroke-linecap="round" stroke-linejoin="round" ><path d="M8 12.500l2.700 2.700L16.500 9.500M7.800 21h8.400c1.700 0 2.500 0 3.200-.3.600-.3 1-.8 1.300-1.300.3-.7.300-1.500.3-3.200V7.800c0-1.700 0-2.500-.3-3.200-.3-.6-.8-1-1.300-1.300C18.700 3 17.900 3 16.200 3H7.800c-1.700 0-2.500 0-3.200.3-.6.300-1 .8-1.300 1.300C3 5.300 3 6.100 3 7.800v8.400c0 1.700 0 2.500.3 3.200.3.600.8 1 1.300 1.300.7.300 1.500.3 3.200.3z"/></svg></span><span class="ic"><svg width="13" height="13" viewBox="0 0 24 24" fill="none" stroke="#596070" stroke-width="1.95" stroke-linecap="round" stroke-linejoin="round" ><path d="M21 9.500H3M16 2v4M8 2v4M12 18v-6M9 15h6M7.800 22h8.400c1.700 0 2.500 0 3.200-.3.600-.3 1-.8 1.300-1.300.3-.7.300-1.500.3-3.200V8.800c0-1.700 0-2.500-.3-3.200-.3-.6-.8-1-1.300-1.300C18.700 4 17.900 4 16.200 4H7.800c-1.700 0-2.500 0-3.200.3-.6.300-1 .8-1.300 1.300C3 6.300 3 7.100 3 8.800v8.400c0 1.700 0 2.500.3 3.200.3.600.8 1 1.300 1.300.7.300 1.500.3 3.200.3z"/></svg></span></div></div><div class="card"><div class="nm">Madeleine Costa</div><span class="av"><svg width="11" height="11" viewBox="0 0 24 24" fill="none" stroke="#4b5260" stroke-width="1.8" stroke-linecap="round" stroke-linejoin="round" ><circle cx="10" cy="8" r="4.200"/><path d="M3 20c.6-3.400 3.200-5.500 7-5.500 1.300 0 2.400.2 3.400.700"/><path d="M17 17l3.200 3.200M20.200 17l-3.200 3.200" stroke-width="2.300"/></svg></span><div class="sub">registration - land first 10</div><div class="amt">$0.00</div><div class="ics"><span class="ic"><svg width="14" height="14" viewBox="0 0 24 24" fill="none" stroke="#596070" stroke-width="1.85" stroke-linecap="round" stroke-linejoin="round" ><path d="M14.5 2.5c3.6.4 6.5 3.300 7 7M14.500 6.500c1.700.3 3 1.600 3.300 3.300M10.200 13.900a14.600 14.600 0 0 1-2.900-4 .9.900 0 0 1 .1-1l.6-.6c.8-.8.8-2 0-2.800L6.500 4c-.8-.8-2-.8-2.800 0l-.6.600c-1 1-1.400 2.400-.9 3.700a19 19 0 0 0 4.500 7 19 19 0 0 0 7 4.500c1.300.5 2.700.1 3.700-.9l.6-.6c.8-.8.8-2 0-2.800l-1.500-1.500c-.8-.8-2-.8-2.800 0l-.6.600a.9.900 0 0 1-1 .1 14.600 14.600 0 0 1-1.900-1.800z"/></svg></span><span class="ic"><svg width="13" height="13" viewBox="0 0 24 24" fill="none" stroke="#596070" stroke-width="1.95" stroke-linecap="round" stroke-linejoin="round" ><path d="M7.700 12h.01M12 12h.01M16.300 12h.01" stroke-width="2.700"/><path d="M12 21a9 9 0 1 0-8.200-5.300c.1.300.2.500.2.700 0 .2 0 .4-.1.700l-.8 3c-.1.500.3.900.8.800l3-.8c.3-.1.500-.1.700-.1.200 0 .4.100.700.200A9 9 0 0 0 12 21z"/></svg></span><span class="ic"><svg width="13" height="13" viewBox="0 0 24 24" fill="none" stroke="#596070" stroke-width="1.95" stroke-linecap="round" stroke-linejoin="round" ><path d="M8 8h.01M2 5.200v4.500c0 .5 0 .7.100 1 .1.200.1.400.2.600.1.200.3.400.6.700l7.700 7.700c1.200 1.200 1.800 1.800 2.500 2 .6.200 1.200.2 1.800 0 .7-.2 1.300-.8 2.500-2l2.200-2.200c1.200-1.200 1.800-1.800 2-2.500.2-.6.200-1.200 0-1.800-.2-.7-.8-1.300-2-2.500L11.900 3c-.3-.3-.5-.5-.7-.6-.2-.1-.4-.2-.6-.2-.3-.1-.5-.1-1-.1H5.200c-1.100 0-1.700 0-2.100.2-.4.200-.7.500-.9.900C2 3.500 2 4.100 2 5.200z"/></svg></span><span class="ic"><svg width="13" height="13" viewBox="0 0 24 24" fill="none" stroke="#596070" stroke-width="1.95" stroke-linecap="round" stroke-linejoin="round" ><path d="M14 2.300V6.400c0 .6 0 .8.100 1 .1.200.2.400.4.400.2.200.5.200 1.100.2h4.100M14 17H8M16 13H8M20 9.900V17.200c0 1.700 0 2.500-.3 3.200-.3.600-.8 1-1.300 1.300-.7.300-1.500.3-3.200.3H8.800c-1.700 0-2.500 0-3.200-.3-.6-.3-1-.8-1.300-1.300C4 19.700 4 18.900 4 17.200V6.800c0-1.700 0-2.500.3-3.200.3-.6.800-1 1.300-1.300C6.300 2 7.100 2 8.800 2h3.300c.7 0 1.100 0 1.400.1.300.1.600.2.900.4.300.2.600.5 1.100 1l3 3c.5.500.8.800 1 1.100.2.300.3.600.4.900.1.300.1.700.1 1.400z"/></svg></span><span class="ic"><svg width="13" height="13" viewBox="0 0 24 24" fill="none" stroke="#596070" stroke-width="1.95" stroke-linecap="round" stroke-linejoin="round" ><path d="M8 12.500l2.700 2.700L16.500 9.500M7.800 21h8.400c1.700 0 2.500 0 3.200-.3.600-.3 1-.8 1.300-1.300.3-.7.300-1.500.3-3.200V7.800c0-1.700 0-2.500-.3-3.200-.3-.6-.8-1-1.300-1.300C18.700 3 17.900 3 16.200 3H7.800c-1.700 0-2.500 0-3.200.3-.6.300-1 .8-1.300 1.300C3 5.300 3 6.100 3 7.800v8.400c0 1.700 0 2.500.3 3.200.3.600.8 1 1.300 1.300.7.300 1.500.3 3.200.3z"/></svg></span><span class="ic"><svg width="13" height="13" viewBox="0 0 24 24" fill="none" stroke="#596070" stroke-width="1.95" stroke-linecap="round" stroke-linejoin="round" ><path d="M21 9.500H3M16 2v4M8 2v4M12 18v-6M9 15h6M7.800 22h8.400c1.700 0 2.500 0 3.200-.3.600-.3 1-.8 1.300-1.300.3-.7.300-1.500.3-3.200V8.800c0-1.700 0-2.500-.3-3.200-.3-.6-.8-1-1.300-1.300C18.700 4 17.900 4 16.200 4H7.800c-1.700 0-2.500 0-3.200.3-.6.300-1 .8-1.300 1.300C3 6.300 3 7.100 3 8.800v8.400c0 1.700 0 2.500.3 3.200.3.600.8 1 1.300 1.300.7.300 1.500.3 3.200.3z"/></svg></span></div></div><div class="card"><div class="nm">Afd</div><span class="av"><svg width="11" height="11" viewBox="0 0 24 24" fill="none" stroke="#4b5260" stroke-width="1.8" stroke-linecap="round" stroke-linejoin="round" ><circle cx="10" cy="8" r="4.200"/><path d="M3 20c.6-3.400 3.200-5.500 7-5.500 1.300 0 2.400.2 3.400.700"/><path d="M17 17l3.200 3.200M20.200 17l-3.200 3.200" stroke-width="2.300"/></svg></span><div class="sub">registration - land first 10</div><div class="amt">$0.00</div><div class="ics"><span class="ic"><svg width="14" height="14" viewBox="0 0 24 24" fill="none" stroke="#596070" stroke-width="1.85" stroke-linecap="round" stroke-linejoin="round" ><path d="M14.5 2.5c3.6.4 6.5 3.300 7 7M14.500 6.500c1.700.3 3 1.600 3.300 3.300M10.200 13.900a14.600 14.600 0 0 1-2.900-4 .9.900 0 0 1 .1-1l.6-.6c.8-.8.8-2 0-2.800L6.500 4c-.8-.8-2-.8-2.800 0l-.6.600c-1 1-1.400 2.400-.9 3.700a19 19 0 0 0 4.500 7 19 19 0 0 0 7 4.500c1.300.5 2.700.1 3.700-.9l.6-.6c.8-.8.8-2 0-2.800l-1.500-1.500c-.8-.8-2-.8-2.800 0l-.6.600a.9.900 0 0 1-1 .1 14.600 14.600 0 0 1-1.900-1.800z"/></svg></span><span class="ic"><svg width="13" height="13" viewBox="0 0 24 24" fill="none" stroke="#596070" stroke-width="1.95" stroke-linecap="round" stroke-linejoin="round" ><path d="M7.700 12h.01M12 12h.01M16.300 12h.01" stroke-width="2.700"/><path d="M12 21a9 9 0 1 0-8.200-5.300c.1.300.2.500.2.700 0 .2 0 .4-.1.700l-.8 3c-.1.500.3.900.8.800l3-.8c.3-.1.500-.1.700-.1.200 0 .4.100.700.200A9 9 0 0 0 12 21z"/></svg></span><span class="ic"><svg width="13" height="13" viewBox="0 0 24 24" fill="none" stroke="#596070" stroke-width="1.95" stroke-linecap="round" stroke-linejoin="round" ><path d="M8 8h.01M2 5.200v4.500c0 .5 0 .7.100 1 .1.200.1.400.2.600.1.200.3.400.6.700l7.700 7.700c1.200 1.200 1.800 1.800 2.500 2 .6.200 1.200.2 1.800 0 .7-.2 1.300-.8 2.500-2l2.200-2.200c1.200-1.200 1.800-1.800 2-2.500.2-.6.200-1.200 0-1.800-.2-.7-.8-1.300-2-2.500L11.900 3c-.3-.3-.5-.5-.7-.6-.2-.1-.4-.2-.6-.2-.3-.1-.5-.1-1-.1H5.200c-1.100 0-1.700 0-2.100.2-.4.200-.7.500-.9.900C2 3.500 2 4.100 2 5.200z"/></svg></span><span class="ic"><svg width="13" height="13" viewBox="0 0 24 24" fill="none" stroke="#596070" stroke-width="1.95" stroke-linecap="round" stroke-linejoin="round" ><path d="M14 2.300V6.400c0 .6 0 .8.100 1 .1.200.2.400.4.400.2.200.5.200 1.100.2h4.100M14 17H8M16 13H8M20 9.900V17.200c0 1.700 0 2.500-.3 3.200-.3.600-.8 1-1.300 1.300-.7.300-1.500.3-3.200.3H8.800c-1.700 0-2.500 0-3.200-.3-.6-.3-1-.8-1.300-1.300C4 19.700 4 18.900 4 17.200V6.800c0-1.700 0-2.500.3-3.200.3-.6.800-1 1.300-1.300C6.300 2 7.100 2 8.800 2h3.300c.7 0 1.100 0 1.400.1.300.1.600.2.900.4.300.2.600.5 1.100 1l3 3c.5.500.8.800 1 1.100.2.300.3.600.4.900.1.300.1.700.1 1.400z"/></svg></span><span class="ic"><svg width="13" height="13" viewBox="0 0 24 24" fill="none" stroke="#596070" stroke-width="1.95" stroke-linecap="round" stroke-linejoin="round" ><path d="M8 12.500l2.700 2.700L16.500 9.500M7.800 21h8.400c1.700 0 2.500 0 3.200-.3.600-.3 1-.8 1.300-1.300.3-.7.300-1.500.3-3.200V7.800c0-1.700 0-2.500-.3-3.200-.3-.6-.8-1-1.300-1.300C18.700 3 17.900 3 16.200 3H7.800c-1.700 0-2.500 0-3.200.3-.6.300-1 .8-1.300 1.300C3 5.300 3 6.100 3 7.800v8.400c0 1.700 0 2.500.3 3.200.3.600.8 1 1.300 1.300.7.300 1.500.3 3.200.3z"/></svg></span><span class="ic"><svg width="13" height="13" viewBox="0 0 24 24" fill="none" stroke="#596070" stroke-width="1.95" stroke-linecap="round" stroke-linejoin="round" ><path d="M21 9.500H3M16 2v4M8 2v4M12 18v-6M9 15h6M7.800 22h8.400c1.700 0 2.500 0 3.200-.3.600-.3 1-.8 1.300-1.300.3-.7.300-1.500.3-3.200V8.800c0-1.700 0-2.500-.3-3.200-.3-.6-.8-1-1.300-1.300C18.700 4 17.900 4 16.200 4H7.800c-1.700 0-2.500 0-3.200.3-.6.300-1 .8-1.300 1.300C3 6.300 3 7.100 3 8.800v8.400c0 1.700 0 2.500.3 3.200.3.600.8 1 1.300 1.300.7.300 1.500.3 3.200.3z"/></svg></span></div></div></div><div class="col"><div class="ch" style="border-top-color:#f3c441"><div class="ct">Trial Purchase</div><div class="cl"><span>4 Leads</span><b>$0.00</b></div></div><div class="card won"><div class="nm">Rod Moore</div><span class="av"><svg width="11" height="11" viewBox="0 0 24 24" fill="none" stroke="#4b5260" stroke-width="1.8" stroke-linecap="round" stroke-linejoin="round" ><circle cx="10" cy="8" r="4.200"/><path d="M3 20c.6-3.400 3.200-5.500 7-5.500 1.300 0 2.400.2 3.400.700"/><path d="M17 17l3.200 3.200M20.200 17l-3.200 3.200" stroke-width="2.300"/></svg></span><div class="sub">Allie Bloyd - Land First 10</div><div class="amt won">$0.00 (Won)</div><div class="ics"><span class="ic"><svg width="14" height="14" viewBox="0 0 24 24" fill="none" stroke="#596070" stroke-width="1.85" stroke-linecap="round" stroke-linejoin="round" ><path d="M14.5 2.5c3.6.4 6.5 3.300 7 7M14.500 6.500c1.700.3 3 1.600 3.300 3.300M10.200 13.900a14.600 14.600 0 0 1-2.900-4 .9.900 0 0 1 .1-1l.6-.6c.8-.8.8-2 0-2.800L6.500 4c-.8-.8-2-.8-2.800 0l-.6.600c-1 1-1.400 2.400-.9 3.700a19 19 0 0 0 4.500 7 19 19 0 0 0 7 4.500c1.300.5 2.700.1 3.700-.9l.6-.6c.8-.8.8-2 0-2.800l-1.500-1.500c-.8-.8-2-.8-2.800 0l-.6.600a.9.900 0 0 1-1 .1 14.600 14.600 0 0 1-1.900-1.800z"/></svg></span><span class="ic"><svg width="13" height="13" viewBox="0 0 24 24" fill="none" stroke="#596070" stroke-width="1.95" stroke-linecap="round" stroke-linejoin="round" ><path d="M7.700 12h.01M12 12h.01M16.300 12h.01" stroke-width="2.700"/><path d="M12 21a9 9 0 1 0-8.200-5.300c.1.300.2.500.2.700 0 .2 0 .4-.1.700l-.8 3c-.1.500.3.900.8.800l3-.8c.3-.1.500-.1.700-.1.200 0 .4.100.700.200A9 9 0 0 0 12 21z"/></svg></span><span class="ic"><svg width="13" height="13" viewBox="0 0 24 24" fill="none" stroke="#596070" stroke-width="1.95" stroke-linecap="round" stroke-linejoin="round" ><path d="M8 8h.01M2 5.200v4.500c0 .5 0 .7.100 1 .1.200.1.400.2.600.1.200.3.400.6.700l7.700 7.700c1.200 1.200 1.800 1.800 2.500 2 .6.200 1.200.2 1.800 0 .7-.2 1.300-.8 2.500-2l2.200-2.200c1.200-1.200 1.800-1.800 2-2.500.2-.6.200-1.200 0-1.800-.2-.7-.8-1.300-2-2.500L11.900 3c-.3-.3-.5-.5-.7-.6-.2-.1-.4-.2-.6-.2-.3-.1-.5-.1-1-.1H5.200c-1.100 0-1.700 0-2.100.2-.4.200-.7.500-.9.900C2 3.500 2 4.100 2 5.200z"/></svg><span class="bdg">3</span></span><span class="ic"><svg width="13" height="13" viewBox="0 0 24 24" fill="none" stroke="#596070" stroke-width="1.95" stroke-linecap="round" stroke-linejoin="round" ><path d="M14 2.300V6.400c0 .6 0 .8.100 1 .1.200.2.400.4.400.2.200.5.200 1.100.2h4.100M14 17H8M16 13H8M20 9.900V17.200c0 1.700 0 2.500-.3 3.200-.3.600-.8 1-1.300 1.300-.7.300-1.500.3-3.200.3H8.800c-1.700 0-2.500 0-3.200-.3-.6-.3-1-.8-1.300-1.300C4 19.700 4 18.900 4 17.200V6.800c0-1.700 0-2.500.3-3.200.3-.6.800-1 1.300-1.300C6.300 2 7.100 2 8.800 2h3.300c.7 0 1.100 0 1.400.1.300.1.600.2.900.4.300.2.600.5 1.100 1l3 3c.5.500.8.800 1 1.100.2.300.3.600.4.900.1.300.1.700.1 1.400z"/></svg></span><span class="ic"><svg width="13" height="13" viewBox="0 0 24 24" fill="none" stroke="#596070" stroke-width="1.95" stroke-linecap="round" stroke-linejoin="round" ><path d="M8 12.500l2.700 2.700L16.500 9.500M7.800 21h8.400c1.700 0 2.500 0 3.200-.3.600-.3 1-.8 1.300-1.300.3-.7.300-1.500.3-3.200V7.800c0-1.700 0-2.500-.3-3.200-.3-.6-.8-1-1.300-1.300C18.700 3 17.900 3 16.200 3H7.800c-1.700 0-2.500 0-3.200.3-.6.300-1 .8-1.300 1.300C3 5.300 3 6.100 3 7.800v8.400c0 1.700 0 2.500.3 3.200.3.600.8 1 1.300 1.300.7.300 1.500.3 3.200.3z"/></svg></span><span class="ic"><svg width="13" height="13" viewBox="0 0 24 24" fill="none" stroke="#596070" stroke-width="1.95" stroke-linecap="round" stroke-linejoin="round" ><path d="M21 9.500H3M16 2v4M8 2v4M12 18v-6M9 15h6M7.800 22h8.400c1.700 0 2.500 0 3.200-.3.600-.3 1-.8 1.300-1.300.3-.7.300-1.500.3-3.200V8.800c0-1.700 0-2.500-.3-3.200-.3-.6-.8-1-1.300-1.300C18.700 4 17.900 4 16.200 4H7.800c-1.700 0-2.500 0-3.200.3-.6.300-1 .8-1.300 1.300C3 6.300 3 7.100 3 8.800v8.400c0 1.700 0 2.500.3 3.200.3.600.8 1 1.300 1.300.7.300 1.500.3 3.200.3z"/></svg></span></div></div><div class="card won"><div class="nm">Swarnak Chowdhury</div><span class="av"><svg width="11" height="11" viewBox="0 0 24 24" fill="none" stroke="#4b5260" stroke-width="1.8" stroke-linecap="round" stroke-linejoin="round" ><circle cx="10" cy="8" r="4.200"/><path d="M3 20c.6-3.400 3.200-5.500 7-5.500 1.300 0 2.400.2 3.400.700"/><path d="M17 17l3.200 3.200M20.200 17l-3.200 3.200" stroke-width="2.300"/></svg></span><div class="sub">Allie Bloyd - Land First 10</div><div class="amt won">$0.00 (Won)</div><div class="ics"><span class="ic"><svg width="14" height="14" viewBox="0 0 24 24" fill="none" stroke="#596070" stroke-width="1.85" stroke-linecap="round" stroke-linejoin="round" ><path d="M14.5 2.5c3.6.4 6.5 3.300 7 7M14.500 6.500c1.700.3 3 1.600 3.300 3.300M10.200 13.900a14.600 14.600 0 0 1-2.900-4 .9.900 0 0 1 .1-1l.6-.6c.8-.8.8-2 0-2.800L6.500 4c-.8-.8-2-.8-2.800 0l-.6.600c-1 1-1.400 2.400-.9 3.700a19 19 0 0 0 4.500 7 19 19 0 0 0 7 4.500c1.300.5 2.700.1 3.700-.9l.6-.6c.8-.8.8-2 0-2.800l-1.500-1.500c-.8-.8-2-.8-2.800 0l-.6.600a.9.900 0 0 1-1 .1 14.600 14.600 0 0 1-1.900-1.800z"/></svg></span><span class="ic"><svg width="13" height="13" viewBox="0 0 24 24" fill="none" stroke="#596070" stroke-width="1.95" stroke-linecap="round" stroke-linejoin="round" ><path d="M7.700 12h.01M12 12h.01M16.300 12h.01" stroke-width="2.700"/><path d="M12 21a9 9 0 1 0-8.200-5.300c.1.300.2.500.2.700 0 .2 0 .4-.1.700l-.8 3c-.1.500.3.900.8.800l3-.8c.3-.1.500-.1.700-.1.200 0 .4.100.700.200A9 9 0 0 0 12 21z"/></svg></span><span class="ic"><svg width="13" height="13" viewBox="0 0 24 24" fill="none" stroke="#596070" stroke-width="1.95" stroke-linecap="round" stroke-linejoin="round" ><path d="M8 8h.01M2 5.200v4.500c0 .5 0 .7.100 1 .1.200.1.400.2.600.1.200.3.400.6.700l7.700 7.700c1.200 1.200 1.800 1.800 2.500 2 .6.200 1.200.2 1.800 0 .7-.2 1.300-.8 2.500-2l2.200-2.200c1.200-1.200 1.800-1.800 2-2.500.2-.6.200-1.200 0-1.800-.2-.7-.8-1.300-2-2.500L11.900 3c-.3-.3-.5-.5-.7-.6-.2-.1-.4-.2-.6-.2-.3-.1-.5-.1-1-.1H5.200c-1.100 0-1.700 0-2.100.2-.4.200-.7.500-.9.900C2 3.500 2 4.100 2 5.200z"/></svg><span class="bdg">4</span></span><span class="ic"><svg width="13" height="13" viewBox="0 0 24 24" fill="none" stroke="#596070" stroke-width="1.95" stroke-linecap="round" stroke-linejoin="round" ><path d="M14 2.300V6.400c0 .6 0 .8.100 1 .1.200.2.400.4.400.2.200.5.200 1.100.2h4.100M14 17H8M16 13H8M20 9.900V17.200c0 1.700 0 2.500-.3 3.200-.3.600-.8 1-1.300 1.300-.7.300-1.500.3-3.200.3H8.800c-1.700 0-2.500 0-3.200-.3-.6-.3-1-.8-1.300-1.300C4 19.700 4 18.900 4 17.200V6.800c0-1.700 0-2.500.3-3.200.3-.6.800-1 1.300-1.300C6.300 2 7.100 2 8.800 2h3.300c.7 0 1.100 0 1.400.1.300.1.600.2.900.4.300.2.600.5 1.100 1l3 3c.5.500.8.800 1 1.100.2.300.3.600.4.900.1.300.1.700.1 1.400z"/></svg></span><span class="ic"><svg width="13" height="13" viewBox="0 0 24 24" fill="none" stroke="#596070" stroke-width="1.95" stroke-linecap="round" stroke-linejoin="round" ><path d="M8 12.500l2.700 2.700L16.500 9.500M7.800 21h8.400c1.700 0 2.500 0 3.200-.3.600-.3 1-.8 1.300-1.300.3-.7.300-1.500.3-3.200V7.800c0-1.700 0-2.500-.3-3.200-.3-.6-.8-1-1.300-1.300C18.700 3 17.900 3 16.200 3H7.800c-1.700 0-2.500 0-3.200.3-.6.300-1 .8-1.300 1.300C3 5.300 3 6.100 3 7.800v8.400c0 1.700 0 2.500.3 3.200.3.600.8 1 1.300 1.300.7.300 1.500.3 3.200.3z"/></svg></span><span class="ic"><svg width="13" height="13" viewBox="0 0 24 24" fill="none" stroke="#596070" stroke-width="1.95" stroke-linecap="round" stroke-linejoin="round" ><path d="M21 9.500H3M16 2v4M8 2v4M12 18v-6M9 15h6M7.800 22h8.400c1.700 0 2.500 0 3.200-.3.600-.3 1-.8 1.300-1.300.3-.7.300-1.500.3-3.200V8.800c0-1.700 0-2.500-.3-3.200-.3-.6-.8-1-1.300-1.300C18.700 4 17.900 4 16.200 4H7.800c-1.700 0-2.500 0-3.200.3-.6.300-1 .8-1.300 1.300C3 6.300 3 7.100 3 8.800v8.400c0 1.700 0 2.500.3 3.200.3.600.8 1 1.300 1.300.7.300 1.500.3 3.200.3z"/></svg></span></div></div><div class="card won"><div class="nm">Gillian Oneil</div><span class="av"><svg width="11" height="11" viewBox="0 0 24 24" fill="none" stroke="#4b5260" stroke-width="1.8" stroke-linecap="round" stroke-linejoin="round" ><circle cx="10" cy="8" r="4.200"/><path d="M3 20c.6-3.400 3.200-5.500 7-5.500 1.300 0 2.400.2 3.400.700"/><path d="M17 17l3.200 3.200M20.200 17l-3.200 3.200" stroke-width="2.300"/></svg></span><div class="sub">Allie Bloyd - Land First 10</div><div class="amt won">$0.00 (Won)</div><div class="ics"><span class="ic"><svg width="14" height="14" viewBox="0 0 24 24" fill="none" stroke="#596070" stroke-width="1.85" stroke-linecap="round" stroke-linejoin="round" ><path d="M14.5 2.5c3.6.4 6.5 3.300 7 7M14.500 6.500c1.700.3 3 1.600 3.300 3.300M10.200 13.900a14.600 14.600 0 0 1-2.900-4 .9.900 0 0 1 .1-1l.6-.6c.8-.8.8-2 0-2.800L6.500 4c-.8-.8-2-.8-2.800 0l-.6.600c-1 1-1.400 2.400-.9 3.700a19 19 0 0 0 4.500 7 19 19 0 0 0 7 4.500c1.300.5 2.700.1 3.700-.9l.6-.6c.8-.8.8-2 0-2.800l-1.500-1.500c-.8-.8-2-.8-2.800 0l-.6.600a.9.900 0 0 1-1 .1 14.600 14.600 0 0 1-1.900-1.800z"/></svg></span><span class="ic"><svg width="13" height="13" viewBox="0 0 24 24" fill="none" stroke="#596070" stroke-width="1.95" stroke-linecap="round" stroke-linejoin="round" ><path d="M7.700 12h.01M12 12h.01M16.300 12h.01" stroke-width="2.700"/><path d="M12 21a9 9 0 1 0-8.200-5.300c.1.300.2.500.2.700 0 .2 0 .4-.1.700l-.8 3c-.1.500.3.900.8.800l3-.8c.3-.1.500-.1.700-.1.200 0 .4.100.700.200A9 9 0 0 0 12 21z"/></svg></span><span class="ic"><svg width="13" height="13" viewBox="0 0 24 24" fill="none" stroke="#596070" stroke-width="1.95" stroke-linecap="round" stroke-linejoin="round" ><path d="M8 8h.01M2 5.200v4.500c0 .5 0 .7.100 1 .1.200.1.400.2.600.1.200.3.400.6.700l7.700 7.700c1.200 1.200 1.800 1.800 2.500 2 .6.200 1.200.2 1.800 0 .7-.2 1.300-.8 2.500-2l2.200-2.200c1.200-1.200 1.800-1.800 2-2.500.2-.6.200-1.200 0-1.800-.2-.7-.8-1.300-2-2.500L11.900 3c-.3-.3-.5-.5-.7-.6-.2-.1-.4-.2-.6-.2-.3-.1-.5-.1-1-.1H5.200c-1.100 0-1.700 0-2.100.2-.4.200-.7.500-.9.900C2 3.500 2 4.100 2 5.200z"/></svg><span class="bdg">4</span></span><span class="ic"><svg width="13" height="13" viewBox="0 0 24 24" fill="none" stroke="#596070" stroke-width="1.95" stroke-linecap="round" stroke-linejoin="round" ><path d="M14 2.300V6.400c0 .6 0 .8.100 1 .1.200.2.400.4.400.2.200.5.200 1.100.2h4.100M14 17H8M16 13H8M20 9.900V17.200c0 1.700 0 2.500-.3 3.200-.3.600-.8 1-1.300 1.300-.7.300-1.500.3-3.200.3H8.800c-1.700 0-2.500 0-3.200-.3-.6-.3-1-.8-1.300-1.300C4 19.700 4 18.900 4 17.200V6.800c0-1.700 0-2.500.3-3.200.3-.6.800-1 1.300-1.300C6.300 2 7.100 2 8.800 2h3.300c.7 0 1.100 0 1.400.1.300.1.600.2.900.4.300.2.600.5 1.100 1l3 3c.5.500.8.800 1 1.100.2.300.3.600.4.900.1.300.1.700.1 1.400z"/></svg></span><span class="ic"><svg width="13" height="13" viewBox="0 0 24 24" fill="none" stroke="#596070" stroke-width="1.95" stroke-linecap="round" stroke-linejoin="round" ><path d="M8 12.500l2.700 2.700L16.500 9.500M7.800 21h8.400c1.700 0 2.500 0 3.200-.3.600-.3 1-.8 1.300-1.300.3-.7.300-1.500.3-3.200V7.800c0-1.700 0-2.500-.3-3.200-.3-.6-.8-1-1.300-1.300C18.700 3 17.900 3 16.200 3H7.800c-1.700 0-2.500 0-3.200.3-.6.300-1 .8-1.300 1.300C3 5.300 3 6.100 3 7.800v8.400c0 1.700 0 2.500.3 3.200.3.600.8 1 1.300 1.300.7.300 1.500.3 3.200.3z"/></svg></span><span class="ic"><svg width="13" height="13" viewBox="0 0 24 24" fill="none" stroke="#596070" stroke-width="1.95" stroke-linecap="round" stroke-linejoin="round" ><path d="M21 9.500H3M16 2v4M8 2v4M12 18v-6M9 15h6M7.800 22h8.400c1.700 0 2.500 0 3.200-.3.600-.3 1-.8 1.300-1.300.3-.7.300-1.500.3-3.200V8.800c0-1.700 0-2.500-.3-3.200-.3-.6-.8-1-1.300-1.300C18.700 4 17.900 4 16.200 4H7.800c-1.700 0-2.500 0-3.200.3-.6.300-1 .8-1.300 1.300C3 6.300 3 7.100 3 8.800v8.400c0 1.700 0 2.500.3 3.200.3.600.8 1 1.300 1.300.7.300 1.500.3 3.200.3z"/></svg></span></div></div><div class="card won"><div class="nm">Rosendo Hernandez</div><span class="av"><svg width="11" height="11" viewBox="0 0 24 24" fill="none" stroke="#4b5260" stroke-width="1.8" stroke-linecap="round" stroke-linejoin="round" ><circle cx="10" cy="8" r="4.200"/><path d="M3 20c.6-3.400 3.200-5.500 7-5.500 1.300 0 2.400.2 3.400.700"/><path d="M17 17l3.200 3.200M20.200 17l-3.200 3.200" stroke-width="2.300"/></svg></span><div class="sub">Allie Bloyd - Land First 10</div><div class="amt won">$0.00 (Won)</div><div class="ics"><span class="ic"><svg width="14" height="14" viewBox="0 0 24 24" fill="none" stroke="#596070" stroke-width="1.85" stroke-linecap="round" stroke-linejoin="round" ><path d="M14.5 2.5c3.6.4 6.5 3.300 7 7M14.500 6.500c1.700.3 3 1.600 3.300 3.300M10.200 13.900a14.600 14.600 0 0 1-2.900-4 .9.900 0 0 1 .1-1l.6-.6c.8-.8.8-2 0-2.800L6.500 4c-.8-.8-2-.8-2.800 0l-.6.600c-1 1-1.400 2.400-.9 3.700a19 19 0 0 0 4.500 7 19 19 0 0 0 7 4.500c1.300.5 2.700.1 3.700-.9l.6-.6c.8-.8.8-2 0-2.800l-1.500-1.500c-.8-.8-2-.8-2.800 0l-.6.600a.9.900 0 0 1-1 .1 14.600 14.600 0 0 1-1.900-1.800z"/></svg></span><span class="ic"><svg width="13" height="13" viewBox="0 0 24 24" fill="none" stroke="#596070" stroke-width="1.95" stroke-linecap="round" stroke-linejoin="round" ><path d="M7.700 12h.01M12 12h.01M16.300 12h.01" stroke-width="2.700"/><path d="M12 21a9 9 0 1 0-8.200-5.300c.1.300.2.500.2.700 0 .2 0 .4-.1.700l-.8 3c-.1.500.3.900.8.800l3-.8c.3-.1.500-.1.700-.1.200 0 .4.100.700.200A9 9 0 0 0 12 21z"/></svg></span><span class="ic"><svg width="13" height="13" viewBox="0 0 24 24" fill="none" stroke="#596070" stroke-width="1.95" stroke-linecap="round" stroke-linejoin="round" ><path d="M8 8h.01M2 5.200v4.500c0 .5 0 .7.100 1 .1.200.1.400.2.600.1.200.3.400.6.700l7.700 7.700c1.200 1.200 1.800 1.800 2.500 2 .6.200 1.200.2 1.800 0 .7-.2 1.300-.8 2.500-2l2.200-2.200c1.200-1.200 1.800-1.800 2-2.500.2-.6.200-1.200 0-1.800-.2-.7-.8-1.300-2-2.500L11.900 3c-.3-.3-.5-.5-.7-.6-.2-.1-.4-.2-.6-.2-.3-.1-.5-.1-1-.1H5.200c-1.100 0-1.700 0-2.100.2-.4.200-.7.500-.9.900C2 3.500 2 4.100 2 5.200z"/></svg><span class="bdg">3</span></span><span class="ic"><svg width="13" height="13" viewBox="0 0 24 24" fill="none" stroke="#596070" stroke-width="1.95" stroke-linecap="round" stroke-linejoin="round" ><path d="M14 2.300V6.400c0 .6 0 .8.100 1 .1.200.2.400.4.400.2.200.5.200 1.100.2h4.100M14 17H8M16 13H8M20 9.900V17.200c0 1.700 0 2.500-.3 3.200-.3.600-.8 1-1.300 1.300-.7.300-1.500.3-3.200.3H8.800c-1.700 0-2.500 0-3.200-.3-.6-.3-1-.8-1.300-1.300C4 19.700 4 18.900 4 17.200V6.800c0-1.700 0-2.500.3-3.200.3-.6.800-1 1.300-1.300C6.300 2 7.100 2 8.800 2h3.300c.7 0 1.100 0 1.400.1.300.1.600.2.900.4.300.2.600.5 1.100 1l3 3c.5.500.8.800 1 1.100.2.300.3.600.4.900.1.300.1.700.1 1.400z"/></svg></span><span class="ic"><svg width="13" height="13" viewBox="0 0 24 24" fill="none" stroke="#596070" stroke-width="1.95" stroke-linecap="round" stroke-linejoin="round" ><path d="M8 12.500l2.700 2.700L16.500 9.500M7.800 21h8.400c1.700 0 2.500 0 3.200-.3.600-.3 1-.8 1.300-1.300.3-.7.300-1.500.3-3.200V7.800c0-1.700 0-2.500-.3-3.200-.3-.6-.8-1-1.300-1.300C18.700 3 17.900 3 16.200 3H7.800c-1.700 0-2.500 0-3.200.3-.6.300-1 .8-1.300 1.300C3 5.300 3 6.100 3 7.800v8.400c0 1.700 0 2.500.3 3.200.3.600.8 1 1.300 1.300.7.300 1.500.3 3.200.3z"/></svg></span><span class="ic"><svg width="13" height="13" viewBox="0 0 24 24" fill="none" stroke="#596070" stroke-width="1.95" stroke-linecap="round" stroke-linejoin="round" ><path d="M21 9.500H3M16 2v4M8 2v4M12 18v-6M9 15h6M7.800 22h8.400c1.700 0 2.500 0 3.200-.3.600-.3 1-.8 1.300-1.300.3-.7.300-1.500.3-3.200V8.800c0-1.700 0-2.500-.3-3.200-.3-.6-.8-1-1.300-1.300C18.700 4 17.900 4 16.200 4H7.800c-1.700 0-2.500 0-3.200.3-.6.300-1 .8-1.300 1.300C3 6.300 3 7.100 3 8.800v8.400c0 1.700 0 2.500.3 3.200.3.600.8 1 1.300 1.300.7.300 1.500.3 3.200.3z"/></svg></span></div></div></div><div class="col"><div class="ch" style="border-top-color:#bab6e4"><div class="ct">Lesson 1 Watched</div><div class="cl"><span>32 Leads</span><b>$0.00</b></div></div><div class="card"><div class="nm">Rod Moore</div><span class="av"><svg width="11" height="11" viewBox="0 0 24 24" fill="none" stroke="#4b5260" stroke-width="1.8" stroke-linecap="round" stroke-linejoin="round" ><circle cx="10" cy="8" r="4.200"/><path d="M3 20c.6-3.400 3.200-5.500 7-5.500 1.300 0 2.400.2 3.400.700"/><path d="M17 17l3.200 3.200M20.200 17l-3.200 3.200" stroke-width="2.300"/></svg></span><div class="sub">registration - land first 10</div><div class="amt">$0.00</div><div class="ics"><span class="ic"><svg width="14" height="14" viewBox="0 0 24 24" fill="none" stroke="#596070" stroke-width="1.85" stroke-linecap="round" stroke-linejoin="round" ><path d="M14.5 2.5c3.6.4 6.5 3.300 7 7M14.500 6.500c1.700.3 3 1.600 3.300 3.300M10.200 13.900a14.600 14.600 0 0 1-2.900-4 .9.900 0 0 1 .1-1l.6-.6c.8-.8.8-2 0-2.800L6.500 4c-.8-.8-2-.8-2.800 0l-.6.600c-1 1-1.400 2.400-.9 3.700a19 19 0 0 0 4.500 7 19 19 0 0 0 7 4.500c1.300.5 2.700.1 3.700-.9l.6-.6c.8-.8.8-2 0-2.800l-1.500-1.500c-.8-.8-2-.8-2.800 0l-.6.600a.9.900 0 0 1-1 .1 14.600 14.600 0 0 1-1.900-1.800z"/></svg></span><span class="ic"><svg width="13" height="13" viewBox="0 0 24 24" fill="none" stroke="#596070" stroke-width="1.95" stroke-linecap="round" stroke-linejoin="round" ><path d="M7.700 12h.01M12 12h.01M16.300 12h.01" stroke-width="2.700"/><path d="M12 21a9 9 0 1 0-8.200-5.300c.1.300.2.500.2.700 0 .2 0 .4-.1.700l-.8 3c-.1.500.3.900.8.800l3-.8c.3-.1.500-.1.700-.1.200 0 .4.100.700.200A9 9 0 0 0 12 21z"/></svg></span><span class="ic"><svg width="13" height="13" viewBox="0 0 24 24" fill="none" stroke="#596070" stroke-width="1.95" stroke-linecap="round" stroke-linejoin="round" ><path d="M8 8h.01M2 5.200v4.500c0 .5 0 .7.100 1 .1.200.1.400.2.600.1.200.3.400.6.700l7.700 7.700c1.200 1.200 1.800 1.800 2.500 2 .6.200 1.200.2 1.800 0 .7-.2 1.300-.8 2.500-2l2.200-2.200c1.200-1.200 1.800-1.800 2-2.500.2-.6.200-1.200 0-1.800-.2-.7-.8-1.300-2-2.500L11.900 3c-.3-.3-.5-.5-.7-.6-.2-.1-.4-.2-.6-.2-.3-.1-.5-.1-1-.1H5.200c-1.100 0-1.700 0-2.100.2-.4.200-.7.500-.9.900C2 3.500 2 4.100 2 5.200z"/></svg><span class="bdg">2</span></span><span class="ic"><svg width="13" height="13" viewBox="0 0 24 24" fill="none" stroke="#596070" stroke-width="1.95" stroke-linecap="round" stroke-linejoin="round" ><path d="M14 2.300V6.400c0 .6 0 .8.100 1 .1.200.2.400.4.400.2.200.5.200 1.100.2h4.100M14 17H8M16 13H8M20 9.900V17.200c0 1.700 0 2.500-.3 3.200-.3.600-.8 1-1.300 1.300-.7.300-1.500.3-3.200.3H8.800c-1.700 0-2.500 0-3.200-.3-.6-.3-1-.8-1.300-1.300C4 19.700 4 18.900 4 17.200V6.800c0-1.700 0-2.500.3-3.200.3-.6.800-1 1.300-1.300C6.300 2 7.100 2 8.800 2h3.300c.7 0 1.100 0 1.400.1.300.1.600.2.900.4.300.2.600.5 1.100 1l3 3c.5.500.8.800 1 1.100.2.300.3.600.4.900.1.300.1.700.1 1.400z"/></svg></span><span class="ic"><svg width="13" height="13" viewBox="0 0 24 24" fill="none" stroke="#596070" stroke-width="1.95" stroke-linecap="round" stroke-linejoin="round" ><path d="M8 12.500l2.700 2.700L16.500 9.500M7.800 21h8.400c1.700 0 2.500 0 3.200-.3.600-.3 1-.8 1.300-1.300.3-.7.300-1.500.3-3.200V7.800c0-1.700 0-2.500-.3-3.200-.3-.6-.8-1-1.300-1.300C18.700 3 17.900 3 16.200 3H7.800c-1.700 0-2.500 0-3.200.3-.6.300-1 .8-1.300 1.300C3 5.300 3 6.100 3 7.800v8.400c0 1.700 0 2.500.3 3.200.3.600.8 1 1.300 1.300.7.300 1.500.3 3.200.3z"/></svg></span><span class="ic"><svg width="13" height="13" viewBox="0 0 24 24" fill="none" stroke="#596070" stroke-width="1.95" stroke-linecap="round" stroke-linejoin="round" ><path d="M21 9.500H3M16 2v4M8 2v4M12 18v-6M9 15h6M7.800 22h8.400c1.700 0 2.500 0 3.200-.3.600-.3 1-.8 1.300-1.300.3-.7.300-1.500.3-3.200V8.800c0-1.700 0-2.500-.3-3.200-.3-.6-.8-1-1.300-1.300C18.700 4 17.900 4 16.200 4H7.800c-1.700 0-2.500 0-3.200.3-.6.300-1 .8-1.300 1.300C3 6.300 3 7.100 3 8.800v8.400c0 1.700 0 2.500.3 3.200.3.600.8 1 1.300 1.300.7.300 1.500.3 3.200.3z"/></svg></span></div></div><div class="card"><div class="nm">Timothy Smith</div><span class="av"><svg width="11" height="11" viewBox="0 0 24 24" fill="none" stroke="#4b5260" stroke-width="1.8" stroke-linecap="round" stroke-linejoin="round" ><circle cx="10" cy="8" r="4.200"/><path d="M3 20c.6-3.400 3.200-5.500 7-5.500 1.300 0 2.400.2 3.400.700"/><path d="M17 17l3.200 3.200M20.200 17l-3.200 3.200" stroke-width="2.300"/></svg></span><div class="sub">registration - land first 10</div><div class="amt">$0.00</div><div class="ics"><span class="ic"><svg width="14" height="14" viewBox="0 0 24 24" fill="none" stroke="#596070" stroke-width="1.85" stroke-linecap="round" stroke-linejoin="round" ><path d="M14.5 2.5c3.6.4 6.5 3.300 7 7M14.500 6.500c1.700.3 3 1.600 3.300 3.300M10.200 13.900a14.600 14.600 0 0 1-2.900-4 .9.900 0 0 1 .1-1l.6-.6c.8-.8.8-2 0-2.800L6.500 4c-.8-.8-2-.8-2.800 0l-.6.600c-1 1-1.400 2.400-.9 3.700a19 19 0 0 0 4.500 7 19 19 0 0 0 7 4.500c1.300.5 2.700.1 3.700-.9l.6-.6c.8-.8.8-2 0-2.800l-1.500-1.500c-.8-.8-2-.8-2.800 0l-.6.600a.9.900 0 0 1-1 .1 14.600 14.600 0 0 1-1.900-1.800z"/></svg></span><span class="ic"><svg width="13" height="13" viewBox="0 0 24 24" fill="none" stroke="#596070" stroke-width="1.95" stroke-linecap="round" stroke-linejoin="round" ><path d="M7.700 12h.01M12 12h.01M16.300 12h.01" stroke-width="2.700"/><path d="M12 21a9 9 0 1 0-8.200-5.300c.1.300.2.500.2.700 0 .2 0 .4-.1.700l-.8 3c-.1.500.3.900.8.800l3-.8c.3-.1.500-.1.700-.1.200 0 .4.100.700.200A9 9 0 0 0 12 21z"/></svg></span><span class="ic"><svg width="13" height="13" viewBox="0 0 24 24" fill="none" stroke="#596070" stroke-width="1.95" stroke-linecap="round" stroke-linejoin="round" ><path d="M8 8h.01M2 5.200v4.500c0 .5 0 .7.100 1 .1.200.1.400.2.600.1.200.3.400.6.700l7.700 7.700c1.200 1.200 1.800 1.800 2.500 2 .6.200 1.200.2 1.800 0 .7-.2 1.300-.8 2.500-2l2.200-2.200c1.200-1.200 1.800-1.800 2-2.500.2-.6.200-1.200 0-1.800-.2-.7-.8-1.300-2-2.500L11.900 3c-.3-.3-.5-.5-.7-.6-.2-.1-.4-.2-.6-.2-.3-.1-.5-.1-1-.1H5.200c-1.100 0-1.700 0-2.100.2-.4.200-.7.500-.9.900C2 3.500 2 4.100 2 5.200z"/></svg><span class="bdg">1</span></span><span class="ic"><svg width="13" height="13" viewBox="0 0 24 24" fill="none" stroke="#596070" stroke-width="1.95" stroke-linecap="round" stroke-linejoin="round" ><path d="M14 2.300V6.400c0 .6 0 .8.100 1 .1.200.2.400.4.400.2.200.5.200 1.100.2h4.100M14 17H8M16 13H8M20 9.900V17.200c0 1.700 0 2.500-.3 3.200-.3.600-.8 1-1.300 1.300-.7.300-1.500.3-3.200.3H8.800c-1.700 0-2.500 0-3.200-.3-.6-.3-1-.8-1.300-1.300C4 19.700 4 18.900 4 17.200V6.800c0-1.700 0-2.500.3-3.200.3-.6.800-1 1.300-1.300C6.300 2 7.100 2 8.800 2h3.300c.7 0 1.100 0 1.400.1.300.1.600.2.900.4.300.2.600.5 1.100 1l3 3c.5.500.8.800 1 1.100.2.300.3.600.4.900.1.300.1.700.1 1.400z"/></svg></span><span class="ic"><svg width="13" height="13" viewBox="0 0 24 24" fill="none" stroke="#596070" stroke-width="1.95" stroke-linecap="round" stroke-linejoin="round" ><path d="M8 12.500l2.700 2.700L16.500 9.500M7.800 21h8.400c1.700 0 2.500 0 3.200-.3.600-.3 1-.8 1.300-1.300.3-.7.300-1.500.3-3.200V7.800c0-1.700 0-2.500-.3-3.200-.3-.6-.8-1-1.300-1.300C18.700 3 17.900 3 16.200 3H7.800c-1.700 0-2.500 0-3.200.3-.6.300-1 .8-1.300 1.300C3 5.300 3 6.100 3 7.800v8.400c0 1.700 0 2.500.3 3.200.3.600.8 1 1.300 1.300.7.300 1.500.3 3.200.3z"/></svg></span><span class="ic"><svg width="13" height="13" viewBox="0 0 24 24" fill="none" stroke="#596070" stroke-width="1.95" stroke-linecap="round" stroke-linejoin="round" ><path d="M21 9.500H3M16 2v4M8 2v4M12 18v-6M9 15h6M7.800 22h8.400c1.700 0 2.500 0 3.200-.3.600-.3 1-.8 1.300-1.300.3-.7.300-1.500.3-3.200V8.800c0-1.700 0-2.500-.3-3.200-.3-.6-.8-1-1.300-1.300C18.700 4 17.900 4 16.200 4H7.800c-1.700 0-2.500 0-3.200.3-.6.300-1 .8-1.300 1.300C3 6.300 3 7.100 3 8.800v8.400c0 1.700 0 2.500.3 3.200.3.600.8 1 1.300 1.300.7.300 1.500.3 3.200.3z"/></svg></span></div></div><div class="card"><div class="nm">Charlie</div><span class="av"><svg width="11" height="11" viewBox="0 0 24 24" fill="none" stroke="#4b5260" stroke-width="1.8" stroke-linecap="round" stroke-linejoin="round" ><circle cx="10" cy="8" r="4.200"/><path d="M3 20c.6-3.400 3.200-5.500 7-5.500 1.300 0 2.400.2 3.400.700"/><path d="M17 17l3.200 3.200M20.200 17l-3.200 3.200" stroke-width="2.300"/></svg></span><div class="sub">registration - land first 10</div><div class="amt">$0.00</div><div class="ics"><span class="ic"><svg width="14" height="14" viewBox="0 0 24 24" fill="none" stroke="#596070" stroke-width="1.85" stroke-linecap="round" stroke-linejoin="round" ><path d="M14.5 2.5c3.6.4 6.5 3.300 7 7M14.500 6.500c1.700.3 3 1.600 3.300 3.300M10.200 13.900a14.600 14.600 0 0 1-2.900-4 .9.900 0 0 1 .1-1l.6-.6c.8-.8.8-2 0-2.800L6.500 4c-.8-.8-2-.8-2.800 0l-.6.600c-1 1-1.400 2.400-.9 3.700a19 19 0 0 0 4.500 7 19 19 0 0 0 7 4.500c1.300.5 2.700.1 3.700-.9l.6-.6c.8-.8.8-2 0-2.800l-1.500-1.500c-.8-.8-2-.8-2.800 0l-.6.600a.9.900 0 0 1-1 .1 14.600 14.600 0 0 1-1.900-1.800z"/></svg></span><span class="ic"><svg width="13" height="13" viewBox="0 0 24 24" fill="none" stroke="#596070" stroke-width="1.95" stroke-linecap="round" stroke-linejoin="round" ><path d="M7.700 12h.01M12 12h.01M16.300 12h.01" stroke-width="2.700"/><path d="M12 21a9 9 0 1 0-8.200-5.300c.1.300.2.500.2.700 0 .2 0 .4-.1.700l-.8 3c-.1.500.3.900.8.800l3-.8c.3-.1.500-.1.700-.1.200 0 .4.100.700.200A9 9 0 0 0 12 21z"/></svg></span><span class="ic"><svg width="13" height="13" viewBox="0 0 24 24" fill="none" stroke="#596070" stroke-width="1.95" stroke-linecap="round" stroke-linejoin="round" ><path d="M8 8h.01M2 5.200v4.500c0 .5 0 .7.100 1 .1.200.1.400.2.600.1.200.3.400.6.700l7.700 7.700c1.200 1.200 1.800 1.800 2.500 2 .6.200 1.200.2 1.800 0 .7-.2 1.300-.8 2.500-2l2.200-2.200c1.200-1.200 1.800-1.800 2-2.500.2-.6.200-1.200 0-1.800-.2-.7-.8-1.300-2-2.500L11.900 3c-.3-.3-.5-.5-.7-.6-.2-.1-.4-.2-.6-.2-.3-.1-.5-.1-1-.1H5.200c-1.100 0-1.700 0-2.100.2-.4.200-.7.500-.9.900C2 3.500 2 4.100 2 5.200z"/></svg><span class="bdg">1</span></span><span class="ic"><svg width="13" height="13" viewBox="0 0 24 24" fill="none" stroke="#596070" stroke-width="1.95" stroke-linecap="round" stroke-linejoin="round" ><path d="M14 2.300V6.400c0 .6 0 .8.100 1 .1.200.2.400.4.400.2.200.5.200 1.100.2h4.100M14 17H8M16 13H8M20 9.900V17.200c0 1.700 0 2.500-.3 3.200-.3.600-.8 1-1.300 1.300-.7.300-1.500.3-3.200.3H8.800c-1.700 0-2.500 0-3.200-.3-.6-.3-1-.8-1.300-1.300C4 19.700 4 18.900 4 17.200V6.800c0-1.700 0-2.500.3-3.200.3-.6.800-1 1.300-1.300C6.300 2 7.100 2 8.800 2h3.300c.7 0 1.100 0 1.400.1.300.1.600.2.900.4.300.2.600.5 1.100 1l3 3c.5.500.8.800 1 1.100.2.300.3.600.4.900.1.300.1.700.1 1.400z"/></svg></span><span class="ic"><svg width="13" height="13" viewBox="0 0 24 24" fill="none" stroke="#596070" stroke-width="1.95" stroke-linecap="round" stroke-linejoin="round" ><path d="M8 12.500l2.700 2.700L16.500 9.500M7.800 21h8.400c1.700 0 2.500 0 3.200-.3.600-.3 1-.8 1.300-1.300.3-.7.300-1.500.3-3.200V7.800c0-1.700 0-2.500-.3-3.200-.3-.6-.8-1-1.300-1.300C18.700 3 17.900 3 16.200 3H7.800c-1.700 0-2.500 0-3.200.3-.6.300-1 .8-1.300 1.300C3 5.300 3 6.100 3 7.800v8.400c0 1.700 0 2.500.3 3.200.3.600.8 1 1.300 1.300.7.300 1.500.3 3.200.3z"/></svg></span><span class="ic"><svg width="13" height="13" viewBox="0 0 24 24" fill="none" stroke="#596070" stroke-width="1.95" stroke-linecap="round" stroke-linejoin="round" ><path d="M21 9.500H3M16 2v4M8 2v4M12 18v-6M9 15h6M7.800 22h8.400c1.700 0 2.500 0 3.200-.3.600-.3 1-.8 1.300-1.300.3-.7.300-1.500.3-3.200V8.800c0-1.700 0-2.500-.3-3.200-.3-.6-.8-1-1.300-1.300C18.700 4 17.900 4 16.200 4H7.800c-1.700 0-2.500 0-3.200.3-.6.300-1 .8-1.300 1.300C3 6.300 3 7.100 3 8.800v8.400c0 1.700 0 2.500.3 3.200.3.600.8 1 1.300 1.300.7.300 1.500.3 3.200.3z"/></svg></span></div></div><div class="card"><div class="nm">Mark Felker</div><span class="av"><svg width="11" height="11" viewBox="0 0 24 24" fill="none" stroke="#4b5260" stroke-width="1.8" stroke-linecap="round" stroke-linejoin="round" ><circle cx="10" cy="8" r="4.200"/><path d="M3 20c.6-3.400 3.200-5.500 7-5.500 1.300 0 2.400.2 3.400.700"/><path d="M17 17l3.200 3.200M20.200 17l-3.200 3.200" stroke-width="2.300"/></svg></span><div class="sub">registration - land first 10</div><div class="amt">$0.00</div><div class="ics"><span class="ic"><svg width="14" height="14" viewBox="0 0 24 24" fill="none" stroke="#596070" stroke-width="1.85" stroke-linecap="round" stroke-linejoin="round" ><path d="M14.5 2.5c3.6.4 6.5 3.300 7 7M14.500 6.500c1.700.3 3 1.600 3.300 3.300M10.200 13.900a14.600 14.600 0 0 1-2.900-4 .9.900 0 0 1 .1-1l.6-.6c.8-.8.8-2 0-2.800L6.500 4c-.8-.8-2-.8-2.800 0l-.6.600c-1 1-1.400 2.400-.9 3.700a19 19 0 0 0 4.500 7 19 19 0 0 0 7 4.500c1.300.5 2.700.1 3.700-.9l.6-.6c.8-.8.8-2 0-2.800l-1.500-1.500c-.8-.8-2-.8-2.800 0l-.6.600a.9.900 0 0 1-1 .1 14.600 14.600 0 0 1-1.900-1.800z"/></svg></span><span class="ic"><svg width="13" height="13" viewBox="0 0 24 24" fill="none" stroke="#596070" stroke-width="1.95" stroke-linecap="round" stroke-linejoin="round" ><path d="M7.700 12h.01M12 12h.01M16.300 12h.01" stroke-width="2.700"/><path d="M12 21a9 9 0 1 0-8.200-5.300c.1.300.2.500.2.700 0 .2 0 .4-.1.700l-.8 3c-.1.500.3.900.8.800l3-.8c.3-.1.500-.1.700-.1.200 0 .4.100.700.200A9 9 0 0 0 12 21z"/></svg></span><span class="ic"><svg width="13" height="13" viewBox="0 0 24 24" fill="none" stroke="#596070" stroke-width="1.95" stroke-linecap="round" stroke-linejoin="round" ><path d="M8 8h.01M2 5.200v4.500c0 .5 0 .7.100 1 .1.200.1.400.2.600.1.200.3.400.6.700l7.700 7.700c1.200 1.200 1.800 1.800 2.500 2 .6.200 1.200.2 1.800 0 .7-.2 1.300-.8 2.500-2l2.200-2.200c1.200-1.200 1.800-1.800 2-2.500.2-.6.200-1.200 0-1.800-.2-.7-.8-1.300-2-2.500L11.900 3c-.3-.3-.5-.5-.7-.6-.2-.1-.4-.2-.6-.2-.3-.1-.5-.1-1-.1H5.200c-1.100 0-1.700 0-2.100.2-.4.200-.7.500-.9.900C2 3.500 2 4.100 2 5.200z"/></svg><span class="bdg">1</span></span><span class="ic"><svg width="13" height="13" viewBox="0 0 24 24" fill="none" stroke="#596070" stroke-width="1.95" stroke-linecap="round" stroke-linejoin="round" ><path d="M14 2.300V6.400c0 .6 0 .8.100 1 .1.200.2.400.4.400.2.200.5.200 1.100.2h4.100M14 17H8M16 13H8M20 9.900V17.200c0 1.700 0 2.500-.3 3.200-.3.600-.8 1-1.300 1.300-.7.300-1.500.3-3.200.3H8.800c-1.700 0-2.500 0-3.200-.3-.6-.3-1-.8-1.300-1.300C4 19.700 4 18.900 4 17.200V6.800c0-1.700 0-2.500.3-3.200.3-.6.800-1 1.300-1.300C6.300 2 7.100 2 8.800 2h3.300c.7 0 1.100 0 1.400.1.300.1.600.2.900.4.300.2.600.5 1.100 1l3 3c.5.500.8.800 1 1.100.2.300.3.600.4.900.1.300.1.700.1 1.400z"/></svg></span><span class="ic"><svg width="13" height="13" viewBox="0 0 24 24" fill="none" stroke="#596070" stroke-width="1.95" stroke-linecap="round" stroke-linejoin="round" ><path d="M8 12.500l2.700 2.700L16.500 9.500M7.800 21h8.400c1.700 0 2.500 0 3.200-.3.600-.3 1-.8 1.300-1.300.3-.7.300-1.500.3-3.200V7.800c0-1.700 0-2.500-.3-3.200-.3-.6-.8-1-1.300-1.300C18.700 3 17.900 3 16.200 3H7.800c-1.700 0-2.500 0-3.200.3-.6.300-1 .8-1.300 1.300C3 5.300 3 6.100 3 7.800v8.400c0 1.700 0 2.500.3 3.200.3.600.8 1 1.300 1.300.7.300 1.500.3 3.200.3z"/></svg></span><span class="ic"><svg width="13" height="13" viewBox="0 0 24 24" fill="none" stroke="#596070" stroke-width="1.95" stroke-linecap="round" stroke-linejoin="round" ><path d="M21 9.500H3M16 2v4M8 2v4M12 18v-6M9 15h6M7.800 22h8.400c1.700 0 2.500 0 3.200-.3.600-.3 1-.8 1.300-1.300.3-.7.300-1.500.3-3.200V8.800c0-1.700 0-2.500-.3-3.200-.3-.6-.8-1-1.300-1.300C18.700 4 17.900 4 16.200 4H7.800c-1.700 0-2.500 0-3.200.3-.6.300-1 .8-1.300 1.300C3 6.300 3 7.100 3 8.800v8.400c0 1.700 0 2.500.3 3.200.3.600.8 1 1.300 1.300.7.300 1.500.3 3.200.3z"/></svg></span></div></div><div class="card"><div class="nm">Ashutosh p</div><span class="av"><svg width="11" height="11" viewBox="0 0 24 24" fill="none" stroke="#4b5260" stroke-width="1.8" stroke-linecap="round" stroke-linejoin="round" ><circle cx="10" cy="8" r="4.200"/><path d="M3 20c.6-3.400 3.200-5.500 7-5.500 1.300 0 2.400.2 3.400.700"/><path d="M17 17l3.200 3.200M20.200 17l-3.200 3.200" stroke-width="2.300"/></svg></span><div class="sub">registration - land first 10</div><div class="amt">$0.00</div><div class="ics"><span class="ic"><svg width="14" height="14" viewBox="0 0 24 24" fill="none" stroke="#596070" stroke-width="1.85" stroke-linecap="round" stroke-linejoin="round" ><path d="M14.5 2.5c3.6.4 6.5 3.300 7 7M14.500 6.500c1.700.3 3 1.600 3.300 3.300M10.200 13.900a14.600 14.600 0 0 1-2.900-4 .9.900 0 0 1 .1-1l.6-.6c.8-.8.8-2 0-2.800L6.500 4c-.8-.8-2-.8-2.800 0l-.6.600c-1 1-1.400 2.400-.9 3.700a19 19 0 0 0 4.500 7 19 19 0 0 0 7 4.500c1.300.5 2.700.1 3.700-.9l.6-.6c.8-.8.8-2 0-2.800l-1.500-1.500c-.8-.8-2-.8-2.800 0l-.6.600a.9.900 0 0 1-1 .1 14.600 14.600 0 0 1-1.900-1.800z"/></svg></span><span class="ic"><svg width="13" height="13" viewBox="0 0 24 24" fill="none" stroke="#596070" stroke-width="1.95" stroke-linecap="round" stroke-linejoin="round" ><path d="M7.700 12h.01M12 12h.01M16.300 12h.01" stroke-width="2.700"/><path d="M12 21a9 9 0 1 0-8.200-5.300c.1.300.2.500.2.700 0 .2 0 .4-.1.700l-.8 3c-.1.500.3.900.8.800l3-.8c.3-.1.500-.1.700-.1.200 0 .4.100.700.200A9 9 0 0 0 12 21z"/></svg></span><span class="ic"><svg width="13" height="13" viewBox="0 0 24 24" fill="none" stroke="#596070" stroke-width="1.95" stroke-linecap="round" stroke-linejoin="round" ><path d="M8 8h.01M2 5.200v4.500c0 .5 0 .7.100 1 .1.200.1.400.2.600.1.200.3.400.6.700l7.700 7.700c1.200 1.200 1.800 1.800 2.500 2 .6.200 1.200.2 1.800 0 .7-.2 1.300-.8 2.500-2l2.200-2.200c1.200-1.200 1.800-1.800 2-2.500.2-.6.200-1.200 0-1.800-.2-.7-.8-1.300-2-2.500L11.900 3c-.3-.3-.5-.5-.7-.6-.2-.1-.4-.2-.6-.2-.3-.1-.5-.1-1-.1H5.200c-1.100 0-1.700 0-2.100.2-.4.200-.7.500-.9.900C2 3.500 2 4.100 2 5.200z"/></svg><span class="bdg">1</span></span><span class="ic"><svg width="13" height="13" viewBox="0 0 24 24" fill="none" stroke="#596070" stroke-width="1.95" stroke-linecap="round" stroke-linejoin="round" ><path d="M14 2.300V6.400c0 .6 0 .8.100 1 .1.200.2.400.4.400.2.200.5.200 1.100.2h4.100M14 17H8M16 13H8M20 9.900V17.200c0 1.700 0 2.500-.3 3.200-.3.600-.8 1-1.300 1.300-.7.300-1.500.3-3.200.3H8.800c-1.700 0-2.500 0-3.200-.3-.6-.3-1-.8-1.300-1.300C4 19.700 4 18.900 4 17.200V6.800c0-1.700 0-2.500.3-3.200.3-.6.800-1 1.300-1.300C6.300 2 7.100 2 8.800 2h3.300c.7 0 1.100 0 1.400.1.300.1.600.2.900.4.300.2.600.5 1.100 1l3 3c.5.500.8.800 1 1.100.2.300.3.600.4.900.1.300.1.700.1 1.400z"/></svg></span><span class="ic"><svg width="13" height="13" viewBox="0 0 24 24" fill="none" stroke="#596070" stroke-width="1.95" stroke-linecap="round" stroke-linejoin="round" ><path d="M8 12.500l2.700 2.700L16.500 9.500M7.800 21h8.400c1.700 0 2.500 0 3.200-.3.600-.3 1-.8 1.300-1.300.3-.7.300-1.500.3-3.200V7.800c0-1.700 0-2.500-.3-3.200-.3-.6-.8-1-1.300-1.300C18.700 3 17.900 3 16.200 3H7.800c-1.700 0-2.500 0-3.200.3-.6.300-1 .8-1.300 1.300C3 5.300 3 6.100 3 7.800v8.400c0 1.700 0 2.500.3 3.200.3.600.8 1 1.300 1.300.7.300 1.500.3 3.200.3z"/></svg></span><span class="ic"><svg width="13" height="13" viewBox="0 0 24 24" fill="none" stroke="#596070" stroke-width="1.95" stroke-linecap="round" stroke-linejoin="round" ><path d="M21 9.500H3M16 2v4M8 2v4M12 18v-6M9 15h6M7.800 22h8.400c1.700 0 2.500 0 3.200-.3.600-.3 1-.8 1.300-1.300.3-.7.300-1.500.3-3.200V8.800c0-1.700 0-2.500-.3-3.200-.3-.6-.8-1-1.300-1.300C18.700 4 17.900 4 16.200 4H7.800c-1.700 0-2.500 0-3.200.3-.6.300-1 .8-1.300 1.300C3 6.300 3 7.100 3 8.800v8.400c0 1.700 0 2.500.3 3.200.3.600.8 1 1.300 1.300.7.300 1.500.3 3.200.3z"/></svg></span></div></div><div class="card"><div class="nm">Saphira Vidler</div><span class="av"><svg width="11" height="11" viewBox="0 0 24 24" fill="none" stroke="#4b5260" stroke-width="1.8" stroke-linecap="round" stroke-linejoin="round" ><circle cx="10" cy="8" r="4.200"/><path d="M3 20c.6-3.400 3.200-5.500 7-5.500 1.300 0 2.400.2 3.400.700"/><path d="M17 17l3.200 3.200M20.200 17l-3.200 3.200" stroke-width="2.300"/></svg></span><div class="sub">registration - land first 10</div><div class="amt">$0.00</div><div class="ics"><span class="ic"><svg width="14" height="14" viewBox="0 0 24 24" fill="none" stroke="#596070" stroke-width="1.85" stroke-linecap="round" stroke-linejoin="round" ><path d="M14.5 2.5c3.6.4 6.5 3.300 7 7M14.500 6.500c1.700.3 3 1.600 3.300 3.300M10.200 13.900a14.600 14.600 0 0 1-2.900-4 .9.900 0 0 1 .1-1l.6-.6c.8-.8.8-2 0-2.800L6.500 4c-.8-.8-2-.8-2.800 0l-.6.600c-1 1-1.400 2.400-.9 3.700a19 19 0 0 0 4.500 7 19 19 0 0 0 7 4.500c1.300.5 2.700.1 3.700-.9l.6-.6c.8-.8.8-2 0-2.800l-1.500-1.500c-.8-.8-2-.8-2.800 0l-.6.600a.9.900 0 0 1-1 .1 14.600 14.600 0 0 1-1.900-1.800z"/></svg></span><span class="ic"><svg width="13" height="13" viewBox="0 0 24 24" fill="none" stroke="#596070" stroke-width="1.95" stroke-linecap="round" stroke-linejoin="round" ><path d="M7.700 12h.01M12 12h.01M16.300 12h.01" stroke-width="2.700"/><path d="M12 21a9 9 0 1 0-8.200-5.300c.1.300.2.500.2.700 0 .2 0 .4-.1.700l-.8 3c-.1.500.3.900.8.800l3-.8c.3-.1.500-.1.700-.1.200 0 .4.100.700.200A9 9 0 0 0 12 21z"/></svg></span><span class="ic"><svg width="13" height="13" viewBox="0 0 24 24" fill="none" stroke="#596070" stroke-width="1.95" stroke-linecap="round" stroke-linejoin="round" ><path d="M8 8h.01M2 5.200v4.500c0 .5 0 .7.100 1 .1.200.1.400.2.600.1.200.3.400.6.700l7.700 7.700c1.200 1.200 1.800 1.800 2.500 2 .6.200 1.200.2 1.800 0 .7-.2 1.300-.8 2.500-2l2.200-2.200c1.200-1.200 1.800-1.800 2-2.500.2-.6.200-1.200 0-1.800-.2-.7-.8-1.300-2-2.500L11.900 3c-.3-.3-.5-.5-.7-.6-.2-.1-.4-.2-.6-.2-.3-.1-.5-.1-1-.1H5.200c-1.100 0-1.700 0-2.100.2-.4.200-.7.500-.9.900C2 3.500 2 4.100 2 5.200z"/></svg><span class="bdg">1</span></span><span class="ic"><svg width="13" height="13" viewBox="0 0 24 24" fill="none" stroke="#596070" stroke-width="1.95" stroke-linecap="round" stroke-linejoin="round" ><path d="M14 2.300V6.400c0 .6 0 .8.100 1 .1.200.2.400.4.400.2.200.5.200 1.100.2h4.100M14 17H8M16 13H8M20 9.900V17.200c0 1.700 0 2.500-.3 3.200-.3.600-.8 1-1.300 1.300-.7.300-1.500.3-3.200.3H8.800c-1.700 0-2.500 0-3.200-.3-.6-.3-1-.8-1.300-1.300C4 19.700 4 18.900 4 17.200V6.800c0-1.700 0-2.500.3-3.200.3-.6.800-1 1.300-1.300C6.300 2 7.100 2 8.800 2h3.300c.7 0 1.100 0 1.400.1.300.1.600.2.900.4.300.2.600.5 1.100 1l3 3c.5.500.8.800 1 1.100.2.300.3.600.4.900.1.300.1.700.1 1.400z"/></svg></span><span class="ic"><svg width="13" height="13" viewBox="0 0 24 24" fill="none" stroke="#596070" stroke-width="1.95" stroke-linecap="round" stroke-linejoin="round" ><path d="M8 12.500l2.700 2.700L16.500 9.500M7.800 21h8.400c1.700 0 2.500 0 3.200-.3.600-.3 1-.8 1.300-1.300.3-.7.300-1.500.3-3.200V7.800c0-1.700 0-2.500-.3-3.200-.3-.6-.8-1-1.300-1.300C18.700 3 17.900 3 16.200 3H7.800c-1.700 0-2.500 0-3.200.3-.6.300-1 .8-1.300 1.300C3 5.300 3 6.100 3 7.800v8.400c0 1.700 0 2.500.3 3.200.3.600.8 1 1.300 1.300.7.300 1.500.3 3.200.3z"/></svg></span><span class="ic"><svg width="13" height="13" viewBox="0 0 24 24" fill="none" stroke="#596070" stroke-width="1.95" stroke-linecap="round" stroke-linejoin="round" ><path d="M21 9.500H3M16 2v4M8 2v4M12 18v-6M9 15h6M7.800 22h8.400c1.700 0 2.500 0 3.200-.3.600-.3 1-.8 1.300-1.300.3-.7.300-1.500.3-3.200V8.800c0-1.700 0-2.500-.3-3.200-.3-.6-.8-1-1.300-1.300C18.700 4 17.900 4 16.200 4H7.800c-1.700 0-2.500 0-3.200.3-.6.300-1 .8-1.300 1.300C3 6.300 3 7.100 3 8.800v8.400c0 1.700 0 2.500.3 3.200.3.600.8 1 1.300 1.300.7.300 1.500.3 3.200.3z"/></svg></span></div></div></div><div class="col"><div class="ch" style="border-top-color:#93b8f0"><div class="ct">Lesson 2 Watched</div><div class="cl"><span>7 Leads</span><b>$0.00</b></div></div><div class="card"><div class="nm">Swarnak Chowdhury</div><span class="av"><svg width="11" height="11" viewBox="0 0 24 24" fill="none" stroke="#4b5260" stroke-width="1.8" stroke-linecap="round" stroke-linejoin="round" ><circle cx="10" cy="8" r="4.200"/><path d="M3 20c.6-3.400 3.200-5.500 7-5.500 1.300 0 2.400.2 3.400.700"/><path d="M17 17l3.200 3.200M20.200 17l-3.200 3.200" stroke-width="2.300"/></svg></span><div class="sub">registration - land first 10</div><div class="amt">$0.00</div><div class="ics"><span class="ic"><svg width="14" height="14" viewBox="0 0 24 24" fill="none" stroke="#596070" stroke-width="1.85" stroke-linecap="round" stroke-linejoin="round" ><path d="M14.5 2.5c3.6.4 6.5 3.300 7 7M14.500 6.500c1.700.3 3 1.600 3.300 3.300M10.200 13.900a14.600 14.600 0 0 1-2.900-4 .9.900 0 0 1 .1-1l.6-.6c.8-.8.8-2 0-2.800L6.500 4c-.8-.8-2-.8-2.800 0l-.6.600c-1 1-1.400 2.400-.9 3.700a19 19 0 0 0 4.500 7 19 19 0 0 0 7 4.500c1.300.5 2.700.1 3.700-.9l.6-.6c.8-.8.8-2 0-2.800l-1.500-1.500c-.8-.8-2-.8-2.800 0l-.6.600a.9.900 0 0 1-1 .1 14.600 14.600 0 0 1-1.900-1.800z"/></svg></span><span class="ic"><svg width="13" height="13" viewBox="0 0 24 24" fill="none" stroke="#596070" stroke-width="1.95" stroke-linecap="round" stroke-linejoin="round" ><path d="M7.700 12h.01M12 12h.01M16.300 12h.01" stroke-width="2.700"/><path d="M12 21a9 9 0 1 0-8.200-5.300c.1.300.2.500.2.700 0 .2 0 .4-.1.700l-.8 3c-.1.500.3.900.8.800l3-.8c.3-.1.500-.1.700-.1.200 0 .4.100.700.200A9 9 0 0 0 12 21z"/></svg></span><span class="ic"><svg width="13" height="13" viewBox="0 0 24 24" fill="none" stroke="#596070" stroke-width="1.95" stroke-linecap="round" stroke-linejoin="round" ><path d="M8 8h.01M2 5.200v4.500c0 .5 0 .7.100 1 .1.200.1.400.2.600.1.200.3.400.6.700l7.700 7.700c1.200 1.200 1.800 1.800 2.500 2 .6.200 1.200.2 1.800 0 .7-.2 1.300-.8 2.500-2l2.200-2.200c1.200-1.200 1.800-1.800 2-2.500.2-.6.200-1.200 0-1.800-.2-.7-.8-1.300-2-2.500L11.900 3c-.3-.3-.5-.5-.7-.6-.2-.1-.4-.2-.6-.2-.3-.1-.5-.1-1-.1H5.200c-1.100 0-1.700 0-2.100.2-.4.200-.7.500-.9.900C2 3.500 2 4.100 2 5.200z"/></svg><span class="bdg">2</span></span><span class="ic"><svg width="13" height="13" viewBox="0 0 24 24" fill="none" stroke="#596070" stroke-width="1.95" stroke-linecap="round" stroke-linejoin="round" ><path d="M14 2.300V6.400c0 .6 0 .8.100 1 .1.200.2.400.4.400.2.200.5.200 1.100.2h4.100M14 17H8M16 13H8M20 9.900V17.200c0 1.700 0 2.500-.3 3.200-.3.600-.8 1-1.300 1.300-.7.300-1.500.3-3.200.3H8.800c-1.700 0-2.500 0-3.200-.3-.6-.3-1-.8-1.300-1.300C4 19.700 4 18.900 4 17.200V6.800c0-1.700 0-2.500.3-3.200.3-.6.800-1 1.300-1.300C6.300 2 7.100 2 8.800 2h3.300c.7 0 1.100 0 1.400.1.300.1.600.2.900.4.300.2.600.5 1.100 1l3 3c.5.500.8.800 1 1.100.2.300.3.600.4.900.1.300.1.700.1 1.400z"/></svg></span><span class="ic"><svg width="13" height="13" viewBox="0 0 24 24" fill="none" stroke="#596070" stroke-width="1.95" stroke-linecap="round" stroke-linejoin="round" ><path d="M8 12.500l2.700 2.700L16.500 9.500M7.800 21h8.400c1.700 0 2.500 0 3.200-.3.600-.3 1-.8 1.300-1.300.3-.7.300-1.500.3-3.200V7.800c0-1.700 0-2.500-.3-3.200-.3-.6-.8-1-1.300-1.300C18.700 3 17.900 3 16.200 3H7.800c-1.700 0-2.500 0-3.200.3-.6.300-1 .8-1.300 1.300C3 5.300 3 6.100 3 7.800v8.400c0 1.700 0 2.500.3 3.200.3.600.8 1 1.300 1.300.7.300 1.500.3 3.200.3z"/></svg></span><span class="ic"><svg width="13" height="13" viewBox="0 0 24 24" fill="none" stroke="#596070" stroke-width="1.95" stroke-linecap="round" stroke-linejoin="round" ><path d="M21 9.500H3M16 2v4M8 2v4M12 18v-6M9 15h6M7.800 22h8.400c1.700 0 2.500 0 3.200-.3.600-.3 1-.8 1.300-1.300.3-.7.300-1.500.3-3.200V8.800c0-1.700 0-2.500-.3-3.200-.3-.6-.8-1-1.300-1.300C18.700 4 17.900 4 16.200 4H7.800c-1.700 0-2.500 0-3.200.3-.6.300-1 .8-1.300 1.300C3 6.300 3 7.100 3 8.800v8.400c0 1.700 0 2.500.3 3.200.3.600.8 1 1.300 1.300.7.300 1.500.3 3.200.3z"/></svg></span></div></div><div class="card"><div class="nm">Anmol</div><span class="av"><svg width="11" height="11" viewBox="0 0 24 24" fill="none" stroke="#4b5260" stroke-width="1.8" stroke-linecap="round" stroke-linejoin="round" ><circle cx="10" cy="8" r="4.200"/><path d="M3 20c.6-3.400 3.200-5.500 7-5.500 1.300 0 2.400.2 3.400.700"/><path d="M17 17l3.200 3.200M20.200 17l-3.200 3.200" stroke-width="2.300"/></svg></span><div class="sub">registration - land first 10</div><div class="amt">$0.00</div><div class="ics"><span class="ic"><svg width="14" height="14" viewBox="0 0 24 24" fill="none" stroke="#596070" stroke-width="1.85" stroke-linecap="round" stroke-linejoin="round" ><path d="M14.5 2.5c3.6.4 6.5 3.300 7 7M14.500 6.500c1.700.3 3 1.600 3.300 3.300M10.200 13.900a14.600 14.600 0 0 1-2.900-4 .9.900 0 0 1 .1-1l.6-.6c.8-.8.8-2 0-2.800L6.500 4c-.8-.8-2-.8-2.800 0l-.6.600c-1 1-1.400 2.400-.9 3.700a19 19 0 0 0 4.500 7 19 19 0 0 0 7 4.500c1.300.5 2.700.1 3.700-.9l.6-.6c.8-.8.8-2 0-2.800l-1.500-1.500c-.8-.8-2-.8-2.800 0l-.6.600a.9.900 0 0 1-1 .1 14.600 14.600 0 0 1-1.900-1.800z"/></svg></span><span class="ic"><svg width="13" height="13" viewBox="0 0 24 24" fill="none" stroke="#596070" stroke-width="1.95" stroke-linecap="round" stroke-linejoin="round" ><path d="M7.700 12h.01M12 12h.01M16.300 12h.01" stroke-width="2.700"/><path d="M12 21a9 9 0 1 0-8.200-5.300c.1.300.2.500.2.700 0 .2 0 .4-.1.700l-.8 3c-.1.500.3.900.8.800l3-.8c.3-.1.500-.1.700-.1.200 0 .4.100.700.200A9 9 0 0 0 12 21z"/></svg></span><span class="ic"><svg width="13" height="13" viewBox="0 0 24 24" fill="none" stroke="#596070" stroke-width="1.95" stroke-linecap="round" stroke-linejoin="round" ><path d="M8 8h.01M2 5.200v4.500c0 .5 0 .7.100 1 .1.200.1.400.2.600.1.200.3.400.6.700l7.700 7.700c1.200 1.200 1.800 1.800 2.500 2 .6.200 1.200.2 1.800 0 .7-.2 1.300-.8 2.500-2l2.200-2.200c1.200-1.200 1.800-1.800 2-2.500.2-.6.200-1.200 0-1.800-.2-.7-.8-1.300-2-2.500L11.900 3c-.3-.3-.5-.5-.7-.6-.2-.1-.4-.2-.6-.2-.3-.1-.5-.1-1-.1H5.200c-1.100 0-1.700 0-2.100.2-.4.200-.7.500-.9.900C2 3.500 2 4.100 2 5.200z"/></svg><span class="bdg">2</span></span><span class="ic"><svg width="13" height="13" viewBox="0 0 24 24" fill="none" stroke="#596070" stroke-width="1.95" stroke-linecap="round" stroke-linejoin="round" ><path d="M14 2.300V6.400c0 .6 0 .8.100 1 .1.200.2.400.4.400.2.200.5.200 1.100.2h4.100M14 17H8M16 13H8M20 9.900V17.200c0 1.700 0 2.500-.3 3.200-.3.600-.8 1-1.300 1.300-.7.300-1.500.3-3.200.3H8.800c-1.700 0-2.500 0-3.200-.3-.6-.3-1-.8-1.300-1.300C4 19.700 4 18.900 4 17.200V6.800c0-1.700 0-2.500.3-3.200.3-.6.800-1 1.300-1.300C6.300 2 7.100 2 8.800 2h3.300c.7 0 1.100 0 1.400.1.300.1.600.2.900.4.300.2.600.5 1.100 1l3 3c.5.500.8.800 1 1.100.2.300.3.600.4.900.1.300.1.700.1 1.400z"/></svg></span><span class="ic"><svg width="13" height="13" viewBox="0 0 24 24" fill="none" stroke="#596070" stroke-width="1.95" stroke-linecap="round" stroke-linejoin="round" ><path d="M8 12.500l2.700 2.700L16.500 9.500M7.800 21h8.400c1.700 0 2.500 0 3.200-.3.600-.3 1-.8 1.300-1.300.3-.7.300-1.500.3-3.200V7.800c0-1.700 0-2.500-.3-3.200-.3-.6-.8-1-1.300-1.300C18.700 3 17.900 3 16.200 3H7.800c-1.700 0-2.500 0-3.200.3-.6.300-1 .8-1.300 1.300C3 5.300 3 6.100 3 7.800v8.400c0 1.700 0 2.500.3 3.200.3.600.8 1 1.300 1.300.7.300 1.500.3 3.200.3z"/></svg></span><span class="ic"><svg width="13" height="13" viewBox="0 0 24 24" fill="none" stroke="#596070" stroke-width="1.95" stroke-linecap="round" stroke-linejoin="round" ><path d="M21 9.500H3M16 2v4M8 2v4M12 18v-6M9 15h6M7.800 22h8.400c1.700 0 2.500 0 3.200-.3.600-.3 1-.8 1.300-1.300.3-.7.300-1.500.3-3.200V8.800c0-1.700 0-2.500-.3-3.200-.3-.6-.8-1-1.300-1.300C18.700 4 17.900 4 16.200 4H7.800c-1.700 0-2.500 0-3.200.3-.6.300-1 .8-1.300 1.300C3 6.300 3 7.100 3 8.800v8.400c0 1.700 0 2.500.3 3.200.3.600.8 1 1.300 1.300.7.300 1.500.3 3.200.3z"/></svg></span></div></div><div class="card"><div class="nm">Christina Nguyen</div><span class="av"><svg width="11" height="11" viewBox="0 0 24 24" fill="none" stroke="#4b5260" stroke-width="1.8" stroke-linecap="round" stroke-linejoin="round" ><circle cx="10" cy="8" r="4.200"/><path d="M3 20c.6-3.400 3.200-5.500 7-5.500 1.300 0 2.400.2 3.400.700"/><path d="M17 17l3.200 3.200M20.200 17l-3.200 3.200" stroke-width="2.300"/></svg></span><div class="sub">registration - land first 10</div><div class="amt">$0.00</div><div class="ics"><span class="ic"><svg width="14" height="14" viewBox="0 0 24 24" fill="none" stroke="#596070" stroke-width="1.85" stroke-linecap="round" stroke-linejoin="round" ><path d="M14.5 2.5c3.6.4 6.5 3.300 7 7M14.500 6.500c1.700.3 3 1.600 3.300 3.300M10.200 13.900a14.600 14.600 0 0 1-2.900-4 .9.900 0 0 1 .1-1l.6-.6c.8-.8.8-2 0-2.800L6.500 4c-.8-.8-2-.8-2.800 0l-.6.600c-1 1-1.400 2.400-.9 3.700a19 19 0 0 0 4.500 7 19 19 0 0 0 7 4.500c1.300.5 2.700.1 3.700-.9l.6-.6c.8-.8.8-2 0-2.800l-1.500-1.500c-.8-.8-2-.8-2.800 0l-.6.600a.9.900 0 0 1-1 .1 14.600 14.600 0 0 1-1.900-1.800z"/></svg></span><span class="ic"><svg width="13" height="13" viewBox="0 0 24 24" fill="none" stroke="#596070" stroke-width="1.95" stroke-linecap="round" stroke-linejoin="round" ><path d="M7.700 12h.01M12 12h.01M16.300 12h.01" stroke-width="2.700"/><path d="M12 21a9 9 0 1 0-8.200-5.300c.1.300.2.500.2.700 0 .2 0 .4-.1.700l-.8 3c-.1.500.3.900.8.800l3-.8c.3-.1.500-.1.700-.1.200 0 .4.100.700.200A9 9 0 0 0 12 21z"/></svg></span><span class="ic"><svg width="13" height="13" viewBox="0 0 24 24" fill="none" stroke="#596070" stroke-width="1.95" stroke-linecap="round" stroke-linejoin="round" ><path d="M8 8h.01M2 5.200v4.500c0 .5 0 .7.100 1 .1.200.1.400.2.600.1.200.3.400.6.700l7.700 7.700c1.200 1.200 1.800 1.800 2.500 2 .6.200 1.200.2 1.800 0 .7-.2 1.300-.8 2.500-2l2.200-2.200c1.200-1.200 1.800-1.800 2-2.500.2-.6.200-1.200 0-1.800-.2-.7-.8-1.300-2-2.500L11.900 3c-.3-.3-.5-.5-.7-.6-.2-.1-.4-.2-.6-.2-.3-.1-.5-.1-1-.1H5.200c-1.100 0-1.700 0-2.100.2-.4.200-.7.500-.9.900C2 3.500 2 4.100 2 5.200z"/></svg><span class="bdg">1</span></span><span class="ic"><svg width="13" height="13" viewBox="0 0 24 24" fill="none" stroke="#596070" stroke-width="1.95" stroke-linecap="round" stroke-linejoin="round" ><path d="M14 2.300V6.400c0 .6 0 .8.100 1 .1.200.2.400.4.400.2.200.5.200 1.100.2h4.100M14 17H8M16 13H8M20 9.900V17.200c0 1.700 0 2.500-.3 3.200-.3.600-.8 1-1.300 1.300-.7.300-1.500.3-3.200.3H8.800c-1.700 0-2.500 0-3.200-.3-.6-.3-1-.8-1.300-1.300C4 19.700 4 18.900 4 17.200V6.800c0-1.700 0-2.500.3-3.200.3-.6.800-1 1.300-1.300C6.300 2 7.100 2 8.800 2h3.300c.7 0 1.100 0 1.400.1.300.1.600.2.900.4.300.2.600.5 1.100 1l3 3c.5.500.8.800 1 1.100.2.300.3.600.4.900.1.300.1.700.1 1.400z"/></svg></span><span class="ic"><svg width="13" height="13" viewBox="0 0 24 24" fill="none" stroke="#596070" stroke-width="1.95" stroke-linecap="round" stroke-linejoin="round" ><path d="M8 12.500l2.700 2.700L16.500 9.500M7.800 21h8.400c1.700 0 2.500 0 3.200-.3.600-.3 1-.8 1.300-1.300.3-.7.300-1.500.3-3.200V7.800c0-1.700 0-2.500-.3-3.200-.3-.6-.8-1-1.300-1.300C18.700 3 17.900 3 16.200 3H7.800c-1.700 0-2.500 0-3.200.3-.6.300-1 .8-1.300 1.300C3 5.300 3 6.100 3 7.800v8.400c0 1.700 0 2.500.3 3.200.3.600.8 1 1.300 1.300.7.300 1.500.3 3.200.3z"/></svg></span><span class="ic"><svg width="13" height="13" viewBox="0 0 24 24" fill="none" stroke="#596070" stroke-width="1.95" stroke-linecap="round" stroke-linejoin="round" ><path d="M21 9.500H3M16 2v4M8 2v4M12 18v-6M9 15h6M7.800 22h8.400c1.700 0 2.500 0 3.200-.3.600-.3 1-.8 1.300-1.300.3-.7.300-1.500.3-3.200V8.800c0-1.700 0-2.500-.3-3.200-.3-.6-.8-1-1.300-1.300C18.700 4 17.900 4 16.200 4H7.800c-1.700 0-2.500 0-3.200.3-.6.300-1 .8-1.300 1.300C3 6.300 3 7.100 3 8.800v8.400c0 1.700 0 2.500.3 3.200.3.600.8 1 1.300 1.300.7.300 1.500.3 3.200.3z"/></svg></span></div></div><div class="card"><div class="nm">Karan Sharma</div><span class="av"><svg width="11" height="11" viewBox="0 0 24 24" fill="none" stroke="#4b5260" stroke-width="1.8" stroke-linecap="round" stroke-linejoin="round" ><circle cx="10" cy="8" r="4.200"/><path d="M3 20c.6-3.400 3.200-5.500 7-5.500 1.300 0 2.400.2 3.400.700"/><path d="M17 17l3.200 3.200M20.200 17l-3.200 3.200" stroke-width="2.300"/></svg></span><div class="sub">registration - land first 10</div><div class="amt">$0.00</div><div class="ics"><span class="ic"><svg width="14" height="14" viewBox="0 0 24 24" fill="none" stroke="#596070" stroke-width="1.85" stroke-linecap="round" stroke-linejoin="round" ><path d="M14.5 2.5c3.6.4 6.5 3.300 7 7M14.500 6.500c1.700.3 3 1.600 3.300 3.300M10.200 13.900a14.600 14.600 0 0 1-2.900-4 .9.900 0 0 1 .1-1l.6-.6c.8-.8.8-2 0-2.800L6.500 4c-.8-.8-2-.8-2.800 0l-.6.600c-1 1-1.400 2.400-.9 3.700a19 19 0 0 0 4.500 7 19 19 0 0 0 7 4.500c1.300.5 2.700.1 3.700-.9l.6-.6c.8-.8.8-2 0-2.800l-1.500-1.500c-.8-.8-2-.8-2.800 0l-.6.600a.9.900 0 0 1-1 .1 14.600 14.600 0 0 1-1.900-1.800z"/></svg></span><span class="ic"><svg width="13" height="13" viewBox="0 0 24 24" fill="none" stroke="#596070" stroke-width="1.95" stroke-linecap="round" stroke-linejoin="round" ><path d="M7.700 12h.01M12 12h.01M16.300 12h.01" stroke-width="2.700"/><path d="M12 21a9 9 0 1 0-8.200-5.300c.1.300.2.500.2.700 0 .2 0 .4-.1.700l-.8 3c-.1.500.3.900.8.800l3-.8c.3-.1.500-.1.700-.1.200 0 .4.100.700.200A9 9 0 0 0 12 21z"/></svg></span><span class="ic"><svg width="13" height="13" viewBox="0 0 24 24" fill="none" stroke="#596070" stroke-width="1.95" stroke-linecap="round" stroke-linejoin="round" ><path d="M8 8h.01M2 5.200v4.500c0 .5 0 .7.100 1 .1.200.1.400.2.600.1.200.3.400.6.700l7.700 7.700c1.200 1.200 1.800 1.800 2.500 2 .6.200 1.200.2 1.800 0 .7-.2 1.300-.8 2.500-2l2.200-2.200c1.200-1.200 1.800-1.800 2-2.500.2-.6.200-1.200 0-1.800-.2-.7-.8-1.300-2-2.500L11.900 3c-.3-.3-.5-.5-.7-.6-.2-.1-.4-.2-.6-.2-.3-.1-.5-.1-1-.1H5.200c-1.100 0-1.700 0-2.100.2-.4.200-.7.500-.9.900C2 3.500 2 4.100 2 5.200z"/></svg><span class="bdg">1</span></span><span class="ic"><svg width="13" height="13" viewBox="0 0 24 24" fill="none" stroke="#596070" stroke-width="1.95" stroke-linecap="round" stroke-linejoin="round" ><path d="M14 2.300V6.400c0 .6 0 .8.100 1 .1.200.2.400.4.400.2.200.5.200 1.100.2h4.100M14 17H8M16 13H8M20 9.900V17.200c0 1.700 0 2.500-.3 3.200-.3.600-.8 1-1.300 1.300-.7.300-1.500.3-3.200.3H8.800c-1.700 0-2.500 0-3.200-.3-.6-.3-1-.8-1.300-1.300C4 19.700 4 18.900 4 17.200V6.800c0-1.700 0-2.500.3-3.200.3-.6.800-1 1.300-1.300C6.300 2 7.100 2 8.800 2h3.300c.7 0 1.100 0 1.400.1.300.1.600.2.900.4.300.2.600.5 1.100 1l3 3c.5.500.8.800 1 1.100.2.300.3.600.4.900.1.300.1.700.1 1.400z"/></svg></span><span class="ic"><svg width="13" height="13" viewBox="0 0 24 24" fill="none" stroke="#596070" stroke-width="1.95" stroke-linecap="round" stroke-linejoin="round" ><path d="M8 12.500l2.700 2.700L16.500 9.500M7.800 21h8.400c1.700 0 2.500 0 3.200-.3.600-.3 1-.8 1.300-1.300.3-.7.300-1.500.3-3.200V7.800c0-1.700 0-2.500-.3-3.200-.3-.6-.8-1-1.300-1.300C18.700 3 17.900 3 16.200 3H7.800c-1.700 0-2.500 0-3.200.3-.6.300-1 .8-1.300 1.300C3 5.300 3 6.100 3 7.800v8.400c0 1.700 0 2.500.3 3.200.3.600.8 1 1.300 1.300.7.300 1.500.3 3.200.3z"/></svg></span><span class="ic"><svg width="13" height="13" viewBox="0 0 24 24" fill="none" stroke="#596070" stroke-width="1.95" stroke-linecap="round" stroke-linejoin="round" ><path d="M21 9.500H3M16 2v4M8 2v4M12 18v-6M9 15h6M7.800 22h8.400c1.700 0 2.500 0 3.200-.3.600-.3 1-.8 1.300-1.300.3-.7.300-1.500.3-3.200V8.800c0-1.700 0-2.500-.3-3.200-.3-.6-.8-1-1.300-1.300C18.700 4 17.900 4 16.200 4H7.800c-1.700 0-2.500 0-3.200.3-.6.300-1 .8-1.300 1.300C3 6.300 3 7.100 3 8.800v8.400c0 1.700 0 2.500.3 3.200.3.600.8 1 1.300 1.300.7.300 1.500.3 3.200.3z"/></svg></span></div></div><div class="card"><div class="nm">Gerry Montenegro</div><span class="av"><svg width="11" height="11" viewBox="0 0 24 24" fill="none" stroke="#4b5260" stroke-width="1.8" stroke-linecap="round" stroke-linejoin="round" ><circle cx="10" cy="8" r="4.200"/><path d="M3 20c.6-3.400 3.200-5.500 7-5.500 1.300 0 2.400.2 3.400.700"/><path d="M17 17l3.200 3.200M20.200 17l-3.200 3.200" stroke-width="2.300"/></svg></span><div class="sub">14 day free trial - hl home page version 2</div><div class="amt">$0.00</div><div class="ics"><span class="ic"><svg width="14" height="14" viewBox="0 0 24 24" fill="none" stroke="#596070" stroke-width="1.85" stroke-linecap="round" stroke-linejoin="round" ><path d="M14.5 2.5c3.6.4 6.5 3.300 7 7M14.500 6.500c1.700.3 3 1.600 3.300 3.300M10.200 13.900a14.600 14.600 0 0 1-2.900-4 .9.900 0 0 1 .1-1l.6-.6c.8-.8.8-2 0-2.800L6.500 4c-.8-.8-2-.8-2.800 0l-.6.600c-1 1-1.400 2.400-.9 3.700a19 19 0 0 0 4.500 7 19 19 0 0 0 7 4.500c1.300.5 2.700.1 3.700-.9l.6-.6c.8-.8.8-2 0-2.800l-1.500-1.500c-.8-.8-2-.8-2.800 0l-.6.600a.9.900 0 0 1-1 .1 14.600 14.600 0 0 1-1.900-1.800z"/></svg></span><span class="ic"><svg width="13" height="13" viewBox="0 0 24 24" fill="none" stroke="#596070" stroke-width="1.95" stroke-linecap="round" stroke-linejoin="round" ><path d="M7.700 12h.01M12 12h.01M16.300 12h.01" stroke-width="2.700"/><path d="M12 21a9 9 0 1 0-8.200-5.300c.1.300.2.500.2.700 0 .2 0 .4-.1.700l-.8 3c-.1.500.3.900.8.800l3-.8c.3-.1.500-.1.700-.1.200 0 .4.100.700.200A9 9 0 0 0 12 21z"/></svg></span><span class="ic"><svg width="13" height="13" viewBox="0 0 24 24" fill="none" stroke="#596070" stroke-width="1.95" stroke-linecap="round" stroke-linejoin="round" ><path d="M8 8h.01M2 5.200v4.500c0 .5 0 .7.100 1 .1.200.1.400.2.600.1.200.3.400.6.700l7.700 7.700c1.200 1.200 1.800 1.800 2.500 2 .6.200 1.200.2 1.800 0 .7-.2 1.300-.8 2.500-2l2.200-2.200c1.200-1.200 1.800-1.800 2-2.500.2-.6.200-1.200 0-1.800-.2-.7-.8-1.300-2-2.500L11.900 3c-.3-.3-.5-.5-.7-.6-.2-.1-.4-.2-.6-.2-.3-.1-.5-.1-1-.1H5.200c-1.100 0-1.700 0-2.100.2-.4.200-.7.500-.9.900C2 3.500 2 4.100 2 5.200z"/></svg><span class="bdg">38</span></span><span class="ic"><svg width="13" height="13" viewBox="0 0 24 24" fill="none" stroke="#596070" stroke-width="1.95" stroke-linecap="round" stroke-linejoin="round" ><path d="M14 2.300V6.400c0 .6 0 .8.100 1 .1.200.2.400.4.400.2.200.5.200 1.100.2h4.100M14 17H8M16 13H8M20 9.900V17.200c0 1.700 0 2.500-.3 3.200-.3.600-.8 1-1.300 1.300-.7.300-1.500.3-3.200.3H8.800c-1.700 0-2.500 0-3.200-.3-.6-.3-1-.8-1.300-1.300C4 19.700 4 18.900 4 17.200V6.800c0-1.700 0-2.500.3-3.200.3-.6.800-1 1.300-1.300C6.300 2 7.100 2 8.800 2h3.300c.7 0 1.100 0 1.400.1.300.1.600.2.900.4.300.2.600.5 1.100 1l3 3c.5.500.8.800 1 1.100.2.300.3.600.4.900.1.300.1.700.1 1.400z"/></svg></span><span class="ic"><svg width="13" height="13" viewBox="0 0 24 24" fill="none" stroke="#596070" stroke-width="1.95" stroke-linecap="round" stroke-linejoin="round" ><path d="M8 12.500l2.700 2.700L16.500 9.500M7.800 21h8.400c1.700 0 2.500 0 3.200-.3.600-.3 1-.8 1.300-1.300.3-.7.300-1.500.3-3.200V7.800c0-1.700 0-2.500-.3-3.200-.3-.6-.8-1-1.300-1.300C18.700 3 17.900 3 16.200 3H7.800c-1.700 0-2.500 0-3.200.3-.6.300-1 .8-1.300 1.300C3 5.300 3 6.100 3 7.800v8.400c0 1.700 0 2.500.3 3.200.3.600.8 1 1.300 1.300.7.300 1.500.3 3.200.3z"/></svg></span><span class="ic"><svg width="13" height="13" viewBox="0 0 24 24" fill="none" stroke="#596070" stroke-width="1.95" stroke-linecap="round" stroke-linejoin="round" ><path d="M21 9.500H3M16 2v4M8 2v4M12 18v-6M9 15h6M7.800 22h8.400c1.700 0 2.500 0 3.200-.3.600-.3 1-.8 1.300-1.300.3-.7.300-1.500.3-3.200V8.800c0-1.700 0-2.500-.3-3.200-.3-.6-.8-1-1.300-1.300C18.700 4 17.900 4 16.200 4H7.800c-1.700 0-2.500 0-3.200.3-.6.300-1 .8-1.300 1.300C3 6.300 3 7.100 3 8.800v8.400c0 1.700 0 2.500.3 3.200.3.600.8 1 1.300 1.300.7.300 1.500.3 3.200.3z"/></svg></span></div></div><div class="card"><div class="nm">Gerry Montenegro</div><span class="av"><svg width="11" height="11" viewBox="0 0 24 24" fill="none" stroke="#4b5260" stroke-width="1.8" stroke-linecap="round" stroke-linejoin="round" ><circle cx="10" cy="8" r="4.200"/><path d="M3 20c.6-3.400 3.200-5.500 7-5.500 1.300 0 2.400.2 3.400.700"/><path d="M17 17l3.200 3.200M20.200 17l-3.200 3.200" stroke-width="2.300"/></svg></span><div class="sub">14 day free trial - hl home page version 2</div><div class="amt">$0.00</div><div class="ics"><span class="ic"><svg width="14" height="14" viewBox="0 0 24 24" fill="none" stroke="#596070" stroke-width="1.85" stroke-linecap="round" stroke-linejoin="round" ><path d="M14.5 2.5c3.6.4 6.5 3.300 7 7M14.500 6.500c1.700.3 3 1.600 3.300 3.300M10.200 13.900a14.600 14.600 0 0 1-2.900-4 .9.900 0 0 1 .1-1l.6-.6c.8-.8.8-2 0-2.800L6.500 4c-.8-.8-2-.8-2.800 0l-.6.600c-1 1-1.400 2.400-.9 3.700a19 19 0 0 0 4.500 7 19 19 0 0 0 7 4.500c1.300.5 2.700.1 3.700-.9l.6-.6c.8-.8.8-2 0-2.800l-1.500-1.500c-.8-.8-2-.8-2.800 0l-.6.600a.9.900 0 0 1-1 .1 14.600 14.600 0 0 1-1.900-1.800z"/></svg></span><span class="ic"><svg width="13" height="13" viewBox="0 0 24 24" fill="none" stroke="#596070" stroke-width="1.95" stroke-linecap="round" stroke-linejoin="round" ><path d="M7.700 12h.01M12 12h.01M16.300 12h.01" stroke-width="2.700"/><path d="M12 21a9 9 0 1 0-8.200-5.300c.1.300.2.500.2.700 0 .2 0 .4-.1.700l-.8 3c-.1.500.3.900.8.800l3-.8c.3-.1.500-.1.700-.1.200 0 .4.100.700.200A9 9 0 0 0 12 21z"/></svg></span><span class="ic"><svg width="13" height="13" viewBox="0 0 24 24" fill="none" stroke="#596070" stroke-width="1.95" stroke-linecap="round" stroke-linejoin="round" ><path d="M8 8h.01M2 5.200v4.500c0 .5 0 .7.100 1 .1.200.1.400.2.600.1.200.3.400.6.700l7.700 7.700c1.200 1.200 1.800 1.800 2.500 2 .6.200 1.200.2 1.800 0 .7-.2 1.300-.8 2.500-2l2.200-2.200c1.200-1.200 1.800-1.800 2-2.500.2-.6.200-1.200 0-1.800-.2-.7-.8-1.300-2-2.500L11.900 3c-.3-.3-.5-.5-.7-.6-.2-.1-.4-.2-.6-.2-.3-.1-.5-.1-1-.1H5.200c-1.100 0-1.700 0-2.100.2-.4.200-.7.500-.9.900C2 3.500 2 4.100 2 5.200z"/></svg><span class="bdg">1</span></span><span class="ic"><svg width="13" height="13" viewBox="0 0 24 24" fill="none" stroke="#596070" stroke-width="1.95" stroke-linecap="round" stroke-linejoin="round" ><path d="M14 2.300V6.400c0 .6 0 .8.100 1 .1.200.2.400.4.400.2.200.5.200 1.100.2h4.100M14 17H8M16 13H8M20 9.900V17.200c0 1.700 0 2.500-.3 3.200-.3.600-.8 1-1.300 1.300-.7.300-1.500.3-3.200.3H8.800c-1.700 0-2.500 0-3.200-.3-.6-.3-1-.8-1.300-1.300C4 19.700 4 18.900 4 17.200V6.800c0-1.700 0-2.500.3-3.200.3-.6.800-1 1.300-1.300C6.300 2 7.100 2 8.800 2h3.300c.7 0 1.100 0 1.400.1.300.1.600.2.900.4.300.2.600.5 1.100 1l3 3c.5.500.8.800 1 1.100.2.300.3.600.4.900.1.300.1.700.1 1.400z"/></svg></span><span class="ic"><svg width="13" height="13" viewBox="0 0 24 24" fill="none" stroke="#596070" stroke-width="1.95" stroke-linecap="round" stroke-linejoin="round" ><path d="M8 12.500l2.700 2.700L16.500 9.500M7.800 21h8.400c1.700 0 2.500 0 3.200-.3.600-.3 1-.8 1.300-1.300.3-.7.300-1.500.3-3.200V7.800c0-1.700 0-2.500-.3-3.200-.3-.6-.8-1-1.300-1.300C18.700 3 17.900 3 16.200 3H7.800c-1.700 0-2.500 0-3.200.3-.6.300-1 .8-1.300 1.300C3 5.300 3 6.100 3 7.800v8.400c0 1.700 0 2.500.3 3.200.3.600.8 1 1.300 1.300.7.300 1.500.3 3.200.3z"/></svg></span><span class="ic"><svg width="13" height="13" viewBox="0 0 24 24" fill="none" stroke="#596070" stroke-width="1.95" stroke-linecap="round" stroke-linejoin="round" ><path d="M21 9.500H3M16 2v4M8 2v4M12 18v-6M9 15h6M7.800 22h8.400c1.700 0 2.500 0 3.200-.3.600-.3 1-.8 1.300-1.300.3-.7.300-1.500.3-3.200V8.800c0-1.700 0-2.500-.3-3.200-.3-.6-.8-1-1.300-1.300C18.700 4 17.900 4 16.200 4H7.800c-1.700 0-2.500 0-3.200.3-.6.300-1 .8-1.300 1.300C3 6.300 3 7.100 3 8.800v8.400c0 1.700 0 2.500.3 3.200.3.600.8 1 1.300 1.300.7.300 1.500.3 3.200.3z"/></svg></span></div></div></div><div class="col"><div class="ch" style="border-top-color:#5e9def"><div class="ct">Lesson 3 Watched</div><div class="cl"><span>0 Leads</span><b>$0.00</b></div></div></div></div>
</div>
</body></html>
